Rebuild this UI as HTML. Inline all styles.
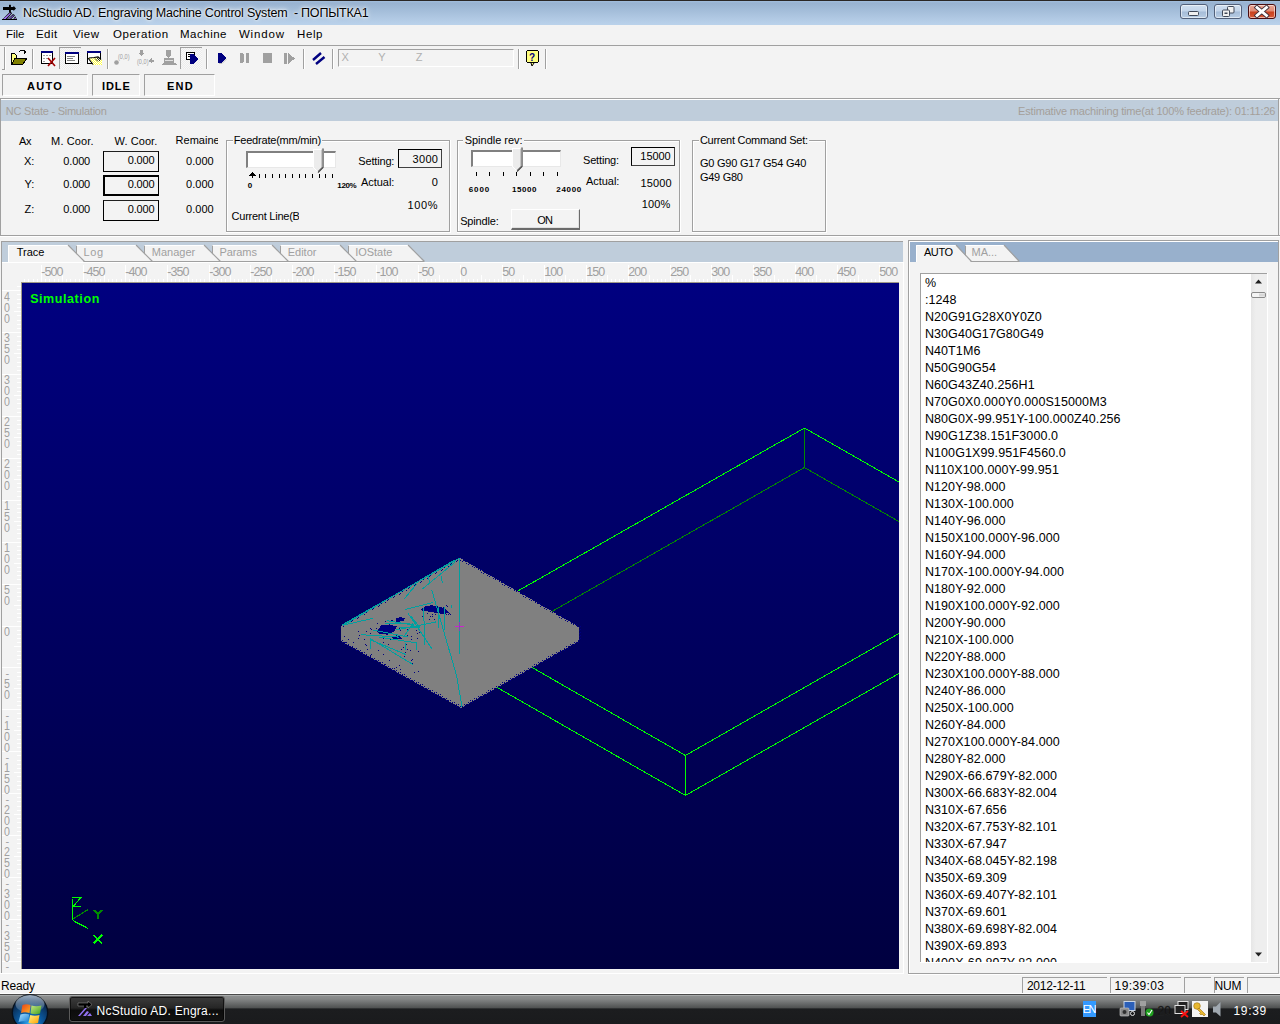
<!DOCTYPE html>
<html><head><meta charset="utf-8"><style>
html,body{margin:0;padding:0;width:1280px;height:1024px;overflow:hidden;background:#f3f3f3;}
body{position:relative;font-family:"Liberation Sans",sans-serif;}
body>div,body>svg{position:absolute;white-space:nowrap;}
</style></head><body>
<div style="left:0px;top:0px;width:1280px;height:25px;background:linear-gradient(#2a2624 0px,#2a2624 1px,#a2bedd 1px,#98b2d0 3px,#b9d1ea 24px,#b9d1ea 25px);"></div>
<svg style="left:0;top:0" width="24" height="24" viewBox="0 0 24 24">
<path d="M3 7 L13.5 7 L13.5 5.8 L16 8.4 L13.5 11 L13.5 9.9 L3 9.9 Z" fill="#000"/>
<rect x="9" y="4.8" width="1.9" height="7.5" fill="#000"/>
<path d="M1.8 20 L10 11.8 L12.2 13 L6.3 20 Z" fill="#000"/>
<path d="M3.2 19 L9.9 12.9 L11 13.5 L5.6 19 Z" fill="#a878ff"/>
<path d="M7 20 L13 14 L15 15.2 L10.2 20 Z" fill="#000"/>
<path d="M8.6 19 L13.2 15 L13.9 15.4 L9.9 19 Z" fill="#9a6cf8"/>
<path d="M12.8 20 L15.2 16.2 L17.2 20 Z" fill="#000"/>
<path d="M14 19.2 L15.2 17.5 L16.2 19.2 Z" fill="#b080ff"/>
<rect x="2" y="19" width="15" height="1" fill="#000"/>
</svg>
<div style="left:1180px;top:4px;width:28px;height:15px;background:linear-gradient(#d0dff0 0%,#c2d4ea 48%,#a5bcd8 52%,#b8cde4 100%);border:1px solid #52607a;border-radius:3px;box-sizing:border-box;box-shadow:inset 0 0 0 1px rgba(255,255,255,.55);"></div>
<div style="left:1214px;top:4px;width:28px;height:15px;background:linear-gradient(#d0dff0 0%,#c2d4ea 48%,#a5bcd8 52%,#b8cde4 100%);border:1px solid #52607a;border-radius:3px;box-sizing:border-box;box-shadow:inset 0 0 0 1px rgba(255,255,255,.55);"></div>
<div style="left:1248px;top:4px;width:28px;height:15px;background:linear-gradient(#e9a594 0%,#e08a74 48%,#c8401e 52%,#d85a38 100%);border:1px solid #4a0c10;border-radius:3px;box-sizing:border-box;box-shadow:inset 0 0 0 1px rgba(255,255,255,.55);"></div>
<svg style="left:1170px;top:0" width="110" height="24" viewBox="1170 0 110 24">
<rect x="1188.5" y="11.5" width="10" height="4" rx="1" fill="#f0f0f0" stroke="#404858"/>
<rect x="1227.5" y="6.5" width="6.5" height="6.5" rx="1" fill="#f0f0f0" stroke="#404858"/>
<rect x="1222.5" y="10" width="7" height="6.5" rx="1" fill="#f0f0f0" stroke="#404858"/>
<rect x="1224.5" y="12.5" width="3" height="1.5" fill="#404858"/>
<path d="M1257 7.5 L1266.5 15.5 M1266.5 7.5 L1257 15.5" stroke="#40303a" stroke-width="4.6" stroke-linecap="square"/>
<path d="M1257 7.5 L1266.5 15.5 M1266.5 7.5 L1257 15.5" stroke="#fff" stroke-width="2.8" stroke-linecap="square"/>
</svg>
<div style="left:22.97px;top:7.39px;font-size:12.5px;line-height:12.5px;color:#000;letter-spacing:-0.208px;white-space:pre;text-shadow:0 0 2px rgba(255,255,255,.95),0 0 4px rgba(255,255,255,.9),0 0 7px rgba(255,255,255,.7);">NcStudio AD. Engraving Machine Control System  - ПОПЫТКА1</div>
<div style="left:0px;top:25px;width:1280px;height:21px;background:#f3f3f3;"></div>
<div style="left:0px;top:45px;width:1280px;height:1px;background:#a0a0a0;"></div>
<div style="left:6.06px;top:28.98px;font-size:11.5px;line-height:11.5px;color:#000;letter-spacing:-0.025px;">File</div>
<div style="left:36.06px;top:28.98px;font-size:11.5px;line-height:11.5px;color:#000;letter-spacing:0.404px;">Edit</div>
<div style="left:72.95px;top:28.98px;font-size:11.5px;line-height:11.5px;color:#000;letter-spacing:0.435px;">View</div>
<div style="left:112.96px;top:28.98px;font-size:11.5px;line-height:11.5px;color:#000;letter-spacing:0.598px;">Operation</div>
<div style="left:180.06px;top:28.98px;font-size:11.5px;line-height:11.5px;color:#000;letter-spacing:0.498px;">Machine</div>
<div style="left:238.95px;top:28.98px;font-size:11.5px;line-height:11.5px;color:#000;letter-spacing:0.824px;">Window</div>
<div style="left:297.06px;top:28.98px;font-size:11.5px;line-height:11.5px;color:#000;letter-spacing:0.592px;">Help</div>
<div style="left:0px;top:46px;width:1280px;height:26px;background:#f3f3f3;"></div>
<div style="left:4px;top:47px;width:1px;height:23px;background:#a0a0a0;"></div>
<div style="left:5px;top:47px;width:1px;height:23px;background:#fff;"></div>
<div style="left:2px;top:69px;width:3px;height:1px;background:#a0a0a0;"></div>
<div style="left:32px;top:49px;width:1px;height:20px;background:#a0a0a0;"></div>
<div style="left:33px;top:49px;width:1px;height:20px;background:#fff;"></div>
<div style="left:107px;top:49px;width:1px;height:20px;background:#a0a0a0;"></div>
<div style="left:108px;top:49px;width:1px;height:20px;background:#fff;"></div>
<div style="left:206px;top:49px;width:1px;height:20px;background:#a0a0a0;"></div>
<div style="left:207px;top:49px;width:1px;height:20px;background:#fff;"></div>
<div style="left:303px;top:49px;width:1px;height:20px;background:#a0a0a0;"></div>
<div style="left:304px;top:49px;width:1px;height:20px;background:#fff;"></div>
<div style="left:332px;top:49px;width:1px;height:20px;background:#a0a0a0;"></div>
<div style="left:333px;top:49px;width:1px;height:20px;background:#fff;"></div>
<div style="left:518px;top:49px;width:1px;height:20px;background:#a0a0a0;"></div>
<div style="left:519px;top:49px;width:1px;height:20px;background:#fff;"></div>
<div style="left:545px;top:49px;width:1px;height:20px;background:#a0a0a0;"></div>
<div style="left:546px;top:49px;width:1px;height:20px;background:#fff;"></div>
<div style="left:59px;top:47px;width:22px;height:22px;border-top:1px solid #a0a0a0;border-left:1px solid #a0a0a0;box-sizing:border-box;background:repeating-conic-gradient(#f8f8f8 0 25%,#ececec 0 50%) 0 0/2px 2px;"></div>
<div style="left:180px;top:47px;width:22px;height:22px;border-top:1px solid #a0a0a0;border-left:1px solid #a0a0a0;box-sizing:border-box;background:repeating-conic-gradient(#f8f8f8 0 25%,#ececec 0 50%) 0 0/2px 2px;"></div>
<svg style="left:0;top:44px" width="560" height="28" viewBox="0 44 560 28" shape-rendering="crispEdges">
<!-- folder -->
<path d="M11 55 L11 64 L23 64 L27 58 L16 58 L16 55 L14 53 L12 53 Z" fill="#ffff80" stroke="#000" stroke-width="1"/>
<path d="M12 64 L15 58 L27 58 L23 64 Z" fill="#808000" stroke="#000" stroke-width="1"/>
<path d="M19 52 Q22 49 25 51" fill="none" stroke="#000" stroke-width="1"/>
<path d="M24 50 L27 52 L24 54 Z" fill="#000"/>
<!-- table with red X -->
<rect x="41.5" y="51.5" width="11" height="12" fill="#fff" stroke="#000"/>
<rect x="41" y="51" width="12" height="2" fill="#000080"/>
<g fill="#a0a0a0"><rect x="43" y="55" width="2" height="1"/><rect x="46" y="55" width="2" height="1"/><rect x="49" y="55" width="2" height="1"/><rect x="43" y="58" width="2" height="1"/><rect x="46" y="58" width="2" height="1"/><rect x="43" y="61" width="2" height="1"/></g>
<path d="M48 58 L55 66 M55 58 L48 66" stroke="#a00000" stroke-width="1.6" shape-rendering="auto"/>
<!-- window -->
<rect x="65.5" y="52.5" width="13" height="11" fill="#fff" stroke="#000"/>
<rect x="65" y="52" width="14" height="2" fill="#000080"/>
<g fill="#808080"><rect x="67" y="56" width="8" height="1"/><rect x="67" y="58" width="6" height="1"/><rect x="67" y="60" width="8" height="1"/></g>
<!-- window with hand -->
<rect x="87.5" y="51.5" width="13" height="12" fill="#fff" stroke="#000"/>
<rect x="87" y="51" width="14" height="2" fill="#000080"/>
<defs><pattern id="chk" width="2" height="2" patternUnits="userSpaceOnUse"><rect width="2" height="2" fill="#ffff40"/><rect width="1" height="1" fill="#fff"/><rect x="1" y="1" width="1" height="1" fill="#fff"/></pattern></defs>
<path d="M88 58 L92 58.5 L95 57 L99 57.5 L101.5 60 L101.5 65 L96 65 L92.5 64.5 Z" fill="url(#chk)"/>
<path d="M88 58 L93 64.5 M89 58 L94 57.5 L98 57 L101 59.5" fill="none" stroke="#000" stroke-width="1.2" shape-rendering="auto"/>
<path d="M95 58.5 L98 61.5 M97 58 L100 61" stroke="#000" stroke-width=".8" shape-rendering="auto"/>
<!-- (0,0) dot -->
<circle cx="116.5" cy="62.5" r="2.3" fill="#a0a0a0" shape-rendering="auto"/>
<text x="118" y="58.6" font-family="Liberation Sans" font-size="7.5" fill="#a0a0a0" textLength="11.5" lengthAdjust="spacingAndGlyphs">(0,0)</text>
<!-- (0,0) arrows -->
<path d="M140 50 h3 v3 h2 l-3.5 3 l-3.5 -3 h2 z" fill="#a0a0a0"/>
<text x="137" y="63.8" font-family="Liberation Sans" font-size="7.5" fill="#a0a0a0" textLength="11.5" lengthAdjust="spacingAndGlyphs">(0,0)</text>
<path d="M148.5 60.8 l3 -2.5 v1.5 h2.5 v2 h-2.5 v1.5 z" fill="#a0a0a0"/>
<!-- machine -->
<path d="M166 50 h5 v5 l-2.5 3 l-2.5 -3 z" fill="#a0a0a0"/>
<rect x="164" y="58" width="10" height="5" fill="#a0a0a0"/>
<rect x="165" y="59.5" width="8" height="1" fill="#e0e0e0"/>
<path d="M161 65 L163 63 L175 63 L177 65 Z" fill="#a0a0a0"/>
<!-- export -->
<rect x="186.5" y="52.5" width="8" height="7" fill="#fff" stroke="#000"/>
<rect x="188" y="54" width="4" height="1" fill="#000"/><rect x="188" y="56" width="4" height="1" fill="#000"/>
<path d="M190 54 L193 54 L198 59 L193 64 L190 64 Z" fill="#000080"/>
<!-- play/pause/stop/step -->
<path d="M218 53 L221 53 L226 58 L221 63 L218 63 Z" fill="#000080"/>
<path d="M219 63.5 L222 63.5 L226.5 59" stroke="#c0c0c0" fill="none" shape-rendering="auto"/>
<rect x="240" y="53" width="3.5" height="10" rx="1" fill="#a0a0a0"/><rect x="245.5" y="53" width="3.5" height="10" rx="1" fill="#a0a0a0"/>
<rect x="263" y="53" width="9" height="10" rx="1" fill="#a0a0a0"/>
<rect x="284" y="53" width="3" height="11" rx="1" fill="#a0a0a0"/>
<path d="M288 53 L295 58.5 L288 64 Z" fill="#a0a0a0"/>
<!-- // -->
<path d="M313 60 L321 53 M316 64 L324.5 57" stroke="#000080" stroke-width="2.4" shape-rendering="auto"/>
<!-- help -->
<rect x="526.5" y="50.5" width="12" height="12" rx="2" fill="#ffff80" stroke="#000"/>
<path d="M531 63 L532 66 L534 63" fill="#ffff80" stroke="#000" shape-rendering="auto"/>
<text x="529" y="60.5" font-family="Liberation Sans" font-weight="bold" font-size="10" fill="#000080">?</text>
</svg>
<div style="left:338px;top:49px;width:176px;height:18px;border-top:1px solid #a0a0a0;border-left:1px solid #a0a0a0;border-right:1px solid #fff;border-bottom:1px solid #fff;box-sizing:border-box;"></div>
<div style="left:341.45px;top:51.63px;font-size:11px;line-height:11px;color:#b0b0b0;">X</div>
<div style="left:378.26px;top:51.63px;font-size:11px;line-height:11px;color:#b0b0b0;">Y</div>
<div style="left:415.65px;top:51.63px;font-size:11px;line-height:11px;color:#b0b0b0;">Z</div>
<div style="left:2px;top:74px;width:86px;height:22px;border-top:1px solid #a0a0a0;border-left:1px solid #a0a0a0;border-right:1px solid #fff;border-bottom:1px solid #fff;box-sizing:border-box;"></div>
<div style="left:27.03px;top:81.23px;font-size:11px;line-height:11px;color:#000;font-weight:bold;letter-spacing:1.257px;">AUTO</div>
<div style="left:92px;top:74px;width:48px;height:22px;border-top:1px solid #a0a0a0;border-left:1px solid #a0a0a0;border-right:1px solid #fff;border-bottom:1px solid #fff;box-sizing:border-box;"></div>
<div style="left:102.06px;top:81.23px;font-size:11px;line-height:11px;color:#000;font-weight:bold;letter-spacing:0.903px;">IDLE</div>
<div style="left:144px;top:74px;width:71px;height:22px;border-top:1px solid #a0a0a0;border-left:1px solid #a0a0a0;border-right:1px solid #fff;border-bottom:1px solid #fff;box-sizing:border-box;"></div>
<div style="left:167.01px;top:81.23px;font-size:11px;line-height:11px;color:#000;font-weight:bold;letter-spacing:1.236px;">END</div>
<div style="left:0px;top:98px;width:1280px;height:1px;background:#a0a0a0;"></div>
<div style="left:0px;top:99px;width:1280px;height:137px;background:#f3f3f3;"></div>
<div style="left:0px;top:99px;width:1px;height:137px;background:#a0a0a0;"></div>
<div style="left:1px;top:99px;width:1278px;height:1px;background:#fff;"></div>
<div style="left:1px;top:100px;width:1277px;height:21px;background:#bfcddb;"></div>
<div style="left:1278px;top:99px;width:1px;height:137px;background:#a0a0a0;"></div>
<div style="left:5.85px;top:105.53px;font-size:11px;line-height:11px;color:#a49f9a;letter-spacing:-0.237px;">NC State - Simulation</div>
<div style="left:1018.10px;top:105.53px;font-size:11px;line-height:11px;color:#a49f9a;letter-spacing:-0.185px;">Estimative machining time(at 100% feedrate): 01:11:26</div>
<div style="left:0px;top:235px;width:1280px;height:1px;background:#a0a0a0;"></div>
<div style="left:0px;top:236px;width:1280px;height:1px;background:#fff;"></div>
<div style="left:18.88px;top:135.73px;font-size:11px;line-height:11px;color:#000;letter-spacing:-0.197px;">Ax</div>
<div style="left:51.10px;top:135.73px;font-size:11px;line-height:11px;color:#000;letter-spacing:0.120px;">M. Coor.</div>
<div style="left:114.55px;top:135.73px;font-size:11px;line-height:11px;color:#000;letter-spacing:0.082px;">W. Coor.</div>
<div style="left:175px;top:130px;width:43px;height:20px;overflow:hidden;"><div style="position:absolute;left:0.6px;top:5.3px;font-size:11px;line-height:11px;">Remained</div></div>
<div style="left:23.91px;top:155.83px;font-size:11px;line-height:11px;color:#000;">X:</div>
<div style="left:63.37px;top:155.83px;font-size:11px;line-height:11px;color:#000;letter-spacing:-0.167px;">0.000</div>
<div style="left:186.07px;top:155.83px;font-size:11px;line-height:11px;color:#000;letter-spacing:0.033px;">0.000</div>
<div style="left:24.52px;top:179.23px;font-size:11px;line-height:11px;color:#000;">Y:</div>
<div style="left:63.37px;top:179.23px;font-size:11px;line-height:11px;color:#000;letter-spacing:-0.167px;">0.000</div>
<div style="left:186.07px;top:179.23px;font-size:11px;line-height:11px;color:#000;letter-spacing:0.033px;">0.000</div>
<div style="left:24.53px;top:204.43px;font-size:11px;line-height:11px;color:#000;">Z:</div>
<div style="left:63.37px;top:204.43px;font-size:11px;line-height:11px;color:#000;letter-spacing:-0.167px;">0.000</div>
<div style="left:186.07px;top:204.43px;font-size:11px;line-height:11px;color:#000;letter-spacing:0.033px;">0.000</div>
<div style="left:103px;top:151px;width:56px;height:21px;border:1px solid #000;box-sizing:border-box;border-top-color:#202020;"></div>
<div style="left:127.77px;top:155.23px;font-size:11px;line-height:11px;color:#000;letter-spacing:-0.167px;">0.000</div>
<div style="left:103px;top:175px;width:56px;height:21px;border:2px solid #000;box-sizing:border-box;border-right-width:1px;border-bottom-width:2px;"></div>
<div style="left:127.77px;top:179.23px;font-size:11px;line-height:11px;color:#000;letter-spacing:-0.167px;">0.000</div>
<div style="left:103px;top:200px;width:56px;height:21px;border:1px solid #000;box-sizing:border-box;border-top-color:#202020;"></div>
<div style="left:127.77px;top:204.23px;font-size:11px;line-height:11px;color:#000;letter-spacing:-0.167px;">0.000</div>
<div style="left:226px;top:140px;width:224px;height:92px;border:1px solid #a0a0a0;box-sizing:border-box;"></div>
<div style="left:227px;top:141px;width:222px;height:90px;border-left:1px solid #fff;border-top:1px solid #fff;box-sizing:border-box;"></div>
<div style="left:450px;top:140px;width:1px;height:93px;background:#fff;"></div>
<div style="left:226px;top:232px;width:225px;height:1px;background:#fff;"></div>
<div style="left:232.7px;top:135px;width:89.7px;height:10px;background:#f3f3f3;"></div>
<div style="left:233.80px;top:135.13px;font-size:11px;line-height:11px;color:#000;letter-spacing:-0.212px;">Feedrate(mm/min)</div>
<div style="left:457px;top:140px;width:223px;height:92px;border:1px solid #a0a0a0;box-sizing:border-box;"></div>
<div style="left:458px;top:141px;width:221px;height:90px;border-left:1px solid #fff;border-top:1px solid #fff;box-sizing:border-box;"></div>
<div style="left:680px;top:140px;width:1px;height:93px;background:#fff;"></div>
<div style="left:457px;top:232px;width:224px;height:1px;background:#fff;"></div>
<div style="left:463.2px;top:135px;width:60.4px;height:10px;background:#f3f3f3;"></div>
<div style="left:464.70px;top:135.13px;font-size:11px;line-height:11px;color:#000;letter-spacing:-0.017px;">Spindle rev:</div>
<div style="left:692px;top:140px;width:134px;height:92px;border:1px solid #a0a0a0;box-sizing:border-box;"></div>
<div style="left:693px;top:141px;width:132px;height:90px;border-left:1px solid #fff;border-top:1px solid #fff;box-sizing:border-box;"></div>
<div style="left:826px;top:140px;width:1px;height:93px;background:#fff;"></div>
<div style="left:692px;top:232px;width:135px;height:1px;background:#fff;"></div>
<div style="left:698.5px;top:135px;width:110.5px;height:10px;background:#f3f3f3;"></div>
<div style="left:699.94px;top:135.13px;font-size:11px;line-height:11px;color:#000;letter-spacing:-0.265px;">Current Command Set:</div>
<div style="left:246px;top:151px;width:90px;height:17px;background:#fff;border-top:2px solid #808080;border-left:2px solid #808080;border-right:1px solid #e8e8e8;border-bottom:1px solid #e8e8e8;box-sizing:border-box;"></div>
<svg style="left:312px;top:148px" width="14" height="26" viewBox="0 0 14 26" shape-rendering="crispEdges">
<path d="M1 1 L11 1 L11 19 L6 24 L1 19 Z" fill="#ececec" stroke="#fff" stroke-width="1"/>
<path d="M11 0.5 L11 19.5 L6 24.5" fill="none" stroke="#404040" stroke-width="1.2" shape-rendering="auto"/>
<path d="M10 1.5 L10 19 L6 23" fill="none" stroke="#a0a0a0" stroke-width="1" shape-rendering="auto"/>
</svg>
<svg style="left:0;top:0" width="460" height="240" shape-rendering="crispEdges"><rect x="252.0" y="174" width="1" height="4" fill="#000"/><rect x="258.7" y="174" width="1" height="4" fill="#000"/><rect x="265.3" y="174" width="1" height="4" fill="#000"/><rect x="272.0" y="174" width="1" height="4" fill="#000"/><rect x="278.7" y="174" width="1" height="4" fill="#000"/><rect x="285.4" y="174" width="1" height="4" fill="#000"/><rect x="292.0" y="174" width="1" height="4" fill="#000"/><rect x="298.7" y="174" width="1" height="4" fill="#000"/><rect x="305.4" y="174" width="1" height="4" fill="#000"/><rect x="312.0" y="174" width="1" height="4" fill="#000"/><rect x="318.7" y="174" width="1" height="4" fill="#000"/><rect x="325.4" y="174" width="1" height="4" fill="#000"/><rect x="332.0" y="174" width="1" height="4" fill="#000"/><path d="M249 175 L252 172 L255 175 Z" fill="#000"/><rect x="249" y="175" width="7" height="1" fill="#000"/></svg>
<div style="left:247.68px;top:182.49px;font-size:8px;line-height:8px;color:#000;font-weight:bold;">0</div>
<div style="left:337.30px;top:182.49px;font-size:8px;line-height:8px;color:#000;font-weight:bold;letter-spacing:-0.349px;">120%</div>
<div style="left:358.30px;top:155.63px;font-size:11px;line-height:11px;color:#000;letter-spacing:-0.171px;">Setting:</div>
<div style="left:398px;top:149px;width:44px;height:19px;border:1px solid #000;box-sizing:border-box;border-right-color:#404040;border-bottom-color:#404040;"></div>
<div style="left:412.58px;top:153.63px;font-size:11px;line-height:11px;color:#000;letter-spacing:0.293px;">3000</div>
<div style="left:360.98px;top:177.23px;font-size:11px;line-height:11px;color:#000;letter-spacing:-0.034px;">Actual:</div>
<div style="left:431.81px;top:177.23px;font-size:11px;line-height:11px;color:#000;">0</div>
<div style="left:407.56px;top:200.33px;font-size:11px;line-height:11px;color:#000;letter-spacing:0.632px;">100%</div>
<div style="left:231px;top:205px;width:67.5px;height:20px;overflow:hidden;"><div style="position:absolute;left:0.6px;top:5.9px;font-size:11px;line-height:11px;letter-spacing:-0.25px;">Current Line(Block)</div></div>
<div style="left:471px;top:150px;width:90px;height:17px;background:#fff;border-top:2px solid #808080;border-left:2px solid #808080;border-right:1px solid #e8e8e8;border-bottom:1px solid #e8e8e8;box-sizing:border-box;"></div>
<svg style="left:511px;top:147px" width="14" height="26" viewBox="0 0 14 26" shape-rendering="crispEdges">
<path d="M1 1 L11 1 L11 19 L6 24 L1 19 Z" fill="#ececec" stroke="#fff" stroke-width="1"/>
<path d="M11 0.5 L11 19.5 L6 24.5" fill="none" stroke="#404040" stroke-width="1.2" shape-rendering="auto"/>
<path d="M10 1.5 L10 19 L6 23" fill="none" stroke="#a0a0a0" stroke-width="1" shape-rendering="auto"/>
</svg>
<svg style="left:0;top:0" width="700" height="240" shape-rendering="crispEdges"><rect x="476.0" y="172" width="1" height="4" fill="#000"/><rect x="489.4" y="172" width="1" height="4" fill="#000"/><rect x="502.9" y="172" width="1" height="4" fill="#000"/><rect x="516.3" y="172" width="1" height="4" fill="#000"/><rect x="529.7" y="172" width="1" height="4" fill="#000"/><rect x="543.1" y="172" width="1" height="4" fill="#000"/><rect x="556.6" y="172" width="1" height="4" fill="#000"/></svg>
<div style="left:468.71px;top:186.49px;font-size:8px;line-height:8px;color:#000;font-weight:bold;letter-spacing:0.941px;">6000</div>
<div style="left:512.00px;top:186.49px;font-size:8px;line-height:8px;color:#000;font-weight:bold;letter-spacing:0.521px;">15000</div>
<div style="left:556.32px;top:186.49px;font-size:8px;line-height:8px;color:#000;font-weight:bold;letter-spacing:0.690px;">24000</div>
<div style="left:583.00px;top:155.43px;font-size:11px;line-height:11px;color:#000;letter-spacing:-0.171px;">Setting:</div>
<div style="left:631px;top:147px;width:44px;height:19px;border:1px solid #000;box-sizing:border-box;border-right-color:#404040;border-bottom-color:#404040;"></div>
<div style="left:640.36px;top:151.33px;font-size:11px;line-height:11px;color:#000;letter-spacing:-0.080px;">15000</div>
<div style="left:585.98px;top:176.43px;font-size:11px;line-height:11px;color:#000;letter-spacing:-0.034px;">Actual:</div>
<div style="left:640.46px;top:177.63px;font-size:11px;line-height:11px;color:#000;letter-spacing:0.145px;">15000</div>
<div style="left:641.76px;top:199.23px;font-size:11px;line-height:11px;color:#000;letter-spacing:0.165px;">100%</div>
<div style="left:460.20px;top:216.03px;font-size:11px;line-height:11px;color:#000;letter-spacing:-0.164px;">Spindle:</div>
<div style="left:511px;top:209px;width:69px;height:21px;background:#f3f3f3;border-top:1px solid #fff;border-left:1px solid #fff;border-right:1px solid #6a6a6a;border-bottom:2px solid #6a6a6a;box-sizing:border-box;box-shadow:inset -1px -1px 0 #e0e0e0;"></div>
<div style="left:537.33px;top:214.53px;font-size:11px;line-height:11px;color:#000;letter-spacing:-0.782px;">ON</div>
<div style="left:699.95px;top:158.13px;font-size:11px;line-height:11px;color:#000;letter-spacing:-0.217px;">G0 G90 G17 G54 G40</div>
<div style="left:699.95px;top:172.03px;font-size:11px;line-height:11px;color:#000;letter-spacing:-0.276px;">G49 G80</div>
<div style="left:1px;top:241px;width:902px;height:1px;background:#a0a0a0;"></div>
<div style="left:1px;top:241px;width:1px;height:732px;background:#a0a0a0;"></div>
<div style="left:2px;top:242px;width:901px;height:20px;background:#bfcddb;"></div>
<div style="left:2px;top:262px;width:901px;height:1px;background:#fff;"></div>
<svg style="left:0;top:0" width="910" height="270"><path d="M348 245 L408 245 L424 262 L348 262 Z" fill="#f3f3f3"/><path d="M348.5 262 L348.5 245.5 L408 245.5" fill="none" stroke="#a0a0a0" stroke-width="1"/><path d="M348.5 245.5 L408 245.5" fill="none" stroke="#fff" stroke-width="1"/><path d="M348 261.5 L424 261.5" fill="none" stroke="#a0a0a0" stroke-width="1"/><path d="M408 245 L424.5 261.5" fill="none" stroke="#a0a0a0" stroke-width="1.1"/><path d="M280 245 L340 245 L356 262 L280 262 Z" fill="#f3f3f3"/><path d="M280.5 262 L280.5 245.5 L340 245.5" fill="none" stroke="#a0a0a0" stroke-width="1"/><path d="M280.5 245.5 L340 245.5" fill="none" stroke="#fff" stroke-width="1"/><path d="M280 261.5 L356 261.5" fill="none" stroke="#a0a0a0" stroke-width="1"/><path d="M340 245 L356.5 261.5" fill="none" stroke="#a0a0a0" stroke-width="1.1"/><path d="M212 245 L272 245 L288 262 L212 262 Z" fill="#f3f3f3"/><path d="M212.5 262 L212.5 245.5 L272 245.5" fill="none" stroke="#a0a0a0" stroke-width="1"/><path d="M212.5 245.5 L272 245.5" fill="none" stroke="#fff" stroke-width="1"/><path d="M212 261.5 L288 261.5" fill="none" stroke="#a0a0a0" stroke-width="1"/><path d="M272 245 L288.5 261.5" fill="none" stroke="#a0a0a0" stroke-width="1.1"/><path d="M144 245 L204 245 L220 262 L144 262 Z" fill="#f3f3f3"/><path d="M144.5 262 L144.5 245.5 L204 245.5" fill="none" stroke="#a0a0a0" stroke-width="1"/><path d="M144.5 245.5 L204 245.5" fill="none" stroke="#fff" stroke-width="1"/><path d="M144 261.5 L220 261.5" fill="none" stroke="#a0a0a0" stroke-width="1"/><path d="M204 245 L220.5 261.5" fill="none" stroke="#a0a0a0" stroke-width="1.1"/><path d="M76 245 L136 245 L152 262 L76 262 Z" fill="#f3f3f3"/><path d="M76.5 262 L76.5 245.5 L136 245.5" fill="none" stroke="#a0a0a0" stroke-width="1"/><path d="M76.5 245.5 L136 245.5" fill="none" stroke="#fff" stroke-width="1"/><path d="M76 261.5 L152 261.5" fill="none" stroke="#a0a0a0" stroke-width="1"/><path d="M136 245 L152.5 261.5" fill="none" stroke="#a0a0a0" stroke-width="1.1"/><path d="M8 245 L68 245 L84 262 L8 262 Z" fill="#f3f3f3"/><path d="M8.5 262 L8.5 245.5 L68 245.5" fill="none" stroke="#fff" stroke-width="1"/><path d="M68 245 L84.5 261.5" fill="none" stroke="#a0a0a0" stroke-width="1.1"/></svg>
<div style="left:16.75px;top:247.13px;font-size:11px;line-height:11px;color:#000;letter-spacing:0.007px;">Trace</div>
<div style="left:83.50px;top:247.13px;font-size:11px;line-height:11px;color:#a0a0a0;letter-spacing:0.629px;">Log</div>
<div style="left:151.70px;top:247.13px;font-size:11px;line-height:11px;color:#a0a0a0;letter-spacing:0.028px;">Manager</div>
<div style="left:219.60px;top:247.13px;font-size:11px;line-height:11px;color:#a0a0a0;letter-spacing:-0.120px;">Params</div>
<div style="left:287.80px;top:247.13px;font-size:11px;line-height:11px;color:#a0a0a0;letter-spacing:-0.030px;">Editor</div>
<div style="left:355.18px;top:247.13px;font-size:11px;line-height:11px;color:#a0a0a0;letter-spacing:-0.032px;">IOState</div>
<svg style="left:0;top:0" width="910" height="980" shape-rendering="crispEdges"><rect x="41" y="265" width="1" height="17" fill="#fff"/><rect x="62" y="275" width="1" height="7" fill="#fff"/><rect x="45" y="279" width="1" height="3" fill="#fff"/><rect x="49" y="279" width="1" height="3" fill="#fff"/><rect x="54" y="279" width="1" height="3" fill="#fff"/><rect x="58" y="279" width="1" height="3" fill="#fff"/><rect x="66" y="279" width="1" height="3" fill="#fff"/><rect x="70" y="279" width="1" height="3" fill="#fff"/><rect x="75" y="279" width="1" height="3" fill="#fff"/><rect x="79" y="279" width="1" height="3" fill="#fff"/><rect x="83" y="265" width="1" height="17" fill="#fff"/><rect x="104" y="275" width="1" height="7" fill="#fff"/><rect x="87" y="279" width="1" height="3" fill="#fff"/><rect x="91" y="279" width="1" height="3" fill="#fff"/><rect x="95" y="279" width="1" height="3" fill="#fff"/><rect x="100" y="279" width="1" height="3" fill="#fff"/><rect x="108" y="279" width="1" height="3" fill="#fff"/><rect x="112" y="279" width="1" height="3" fill="#fff"/><rect x="116" y="279" width="1" height="3" fill="#fff"/><rect x="121" y="279" width="1" height="3" fill="#fff"/><rect x="125" y="265" width="1" height="17" fill="#fff"/><rect x="146" y="275" width="1" height="7" fill="#fff"/><rect x="129" y="279" width="1" height="3" fill="#fff"/><rect x="133" y="279" width="1" height="3" fill="#fff"/><rect x="137" y="279" width="1" height="3" fill="#fff"/><rect x="142" y="279" width="1" height="3" fill="#fff"/><rect x="150" y="279" width="1" height="3" fill="#fff"/><rect x="154" y="279" width="1" height="3" fill="#fff"/><rect x="158" y="279" width="1" height="3" fill="#fff"/><rect x="163" y="279" width="1" height="3" fill="#fff"/><rect x="167" y="265" width="1" height="17" fill="#fff"/><rect x="188" y="275" width="1" height="7" fill="#fff"/><rect x="171" y="279" width="1" height="3" fill="#fff"/><rect x="175" y="279" width="1" height="3" fill="#fff"/><rect x="179" y="279" width="1" height="3" fill="#fff"/><rect x="183" y="279" width="1" height="3" fill="#fff"/><rect x="192" y="279" width="1" height="3" fill="#fff"/><rect x="196" y="279" width="1" height="3" fill="#fff"/><rect x="200" y="279" width="1" height="3" fill="#fff"/><rect x="204" y="279" width="1" height="3" fill="#fff"/><rect x="209" y="265" width="1" height="17" fill="#fff"/><rect x="230" y="275" width="1" height="7" fill="#fff"/><rect x="213" y="279" width="1" height="3" fill="#fff"/><rect x="217" y="279" width="1" height="3" fill="#fff"/><rect x="221" y="279" width="1" height="3" fill="#fff"/><rect x="225" y="279" width="1" height="3" fill="#fff"/><rect x="234" y="279" width="1" height="3" fill="#fff"/><rect x="238" y="279" width="1" height="3" fill="#fff"/><rect x="242" y="279" width="1" height="3" fill="#fff"/><rect x="246" y="279" width="1" height="3" fill="#fff"/><rect x="250" y="265" width="1" height="17" fill="#fff"/><rect x="271" y="275" width="1" height="7" fill="#fff"/><rect x="255" y="279" width="1" height="3" fill="#fff"/><rect x="259" y="279" width="1" height="3" fill="#fff"/><rect x="263" y="279" width="1" height="3" fill="#fff"/><rect x="267" y="279" width="1" height="3" fill="#fff"/><rect x="276" y="279" width="1" height="3" fill="#fff"/><rect x="280" y="279" width="1" height="3" fill="#fff"/><rect x="284" y="279" width="1" height="3" fill="#fff"/><rect x="288" y="279" width="1" height="3" fill="#fff"/><rect x="292" y="265" width="1" height="17" fill="#fff"/><rect x="313" y="275" width="1" height="7" fill="#fff"/><rect x="297" y="279" width="1" height="3" fill="#fff"/><rect x="301" y="279" width="1" height="3" fill="#fff"/><rect x="305" y="279" width="1" height="3" fill="#fff"/><rect x="309" y="279" width="1" height="3" fill="#fff"/><rect x="318" y="279" width="1" height="3" fill="#fff"/><rect x="322" y="279" width="1" height="3" fill="#fff"/><rect x="326" y="279" width="1" height="3" fill="#fff"/><rect x="330" y="279" width="1" height="3" fill="#fff"/><rect x="334" y="265" width="1" height="17" fill="#fff"/><rect x="355" y="275" width="1" height="7" fill="#fff"/><rect x="338" y="279" width="1" height="3" fill="#fff"/><rect x="343" y="279" width="1" height="3" fill="#fff"/><rect x="347" y="279" width="1" height="3" fill="#fff"/><rect x="351" y="279" width="1" height="3" fill="#fff"/><rect x="359" y="279" width="1" height="3" fill="#fff"/><rect x="364" y="279" width="1" height="3" fill="#fff"/><rect x="368" y="279" width="1" height="3" fill="#fff"/><rect x="372" y="279" width="1" height="3" fill="#fff"/><rect x="376" y="265" width="1" height="17" fill="#fff"/><rect x="397" y="275" width="1" height="7" fill="#fff"/><rect x="380" y="279" width="1" height="3" fill="#fff"/><rect x="385" y="279" width="1" height="3" fill="#fff"/><rect x="389" y="279" width="1" height="3" fill="#fff"/><rect x="393" y="279" width="1" height="3" fill="#fff"/><rect x="401" y="279" width="1" height="3" fill="#fff"/><rect x="406" y="279" width="1" height="3" fill="#fff"/><rect x="410" y="279" width="1" height="3" fill="#fff"/><rect x="414" y="279" width="1" height="3" fill="#fff"/><rect x="418" y="265" width="1" height="17" fill="#fff"/><rect x="439" y="275" width="1" height="7" fill="#fff"/><rect x="422" y="279" width="1" height="3" fill="#fff"/><rect x="426" y="279" width="1" height="3" fill="#fff"/><rect x="431" y="279" width="1" height="3" fill="#fff"/><rect x="435" y="279" width="1" height="3" fill="#fff"/><rect x="443" y="279" width="1" height="3" fill="#fff"/><rect x="447" y="279" width="1" height="3" fill="#fff"/><rect x="452" y="279" width="1" height="3" fill="#fff"/><rect x="456" y="279" width="1" height="3" fill="#fff"/><rect x="460" y="265" width="1" height="17" fill="#fff"/><rect x="481" y="275" width="1" height="7" fill="#fff"/><rect x="464" y="279" width="1" height="3" fill="#fff"/><rect x="468" y="279" width="1" height="3" fill="#fff"/><rect x="473" y="279" width="1" height="3" fill="#fff"/><rect x="477" y="279" width="1" height="3" fill="#fff"/><rect x="485" y="279" width="1" height="3" fill="#fff"/><rect x="489" y="279" width="1" height="3" fill="#fff"/><rect x="494" y="279" width="1" height="3" fill="#fff"/><rect x="498" y="279" width="1" height="3" fill="#fff"/><rect x="502" y="265" width="1" height="17" fill="#fff"/><rect x="523" y="275" width="1" height="7" fill="#fff"/><rect x="506" y="279" width="1" height="3" fill="#fff"/><rect x="510" y="279" width="1" height="3" fill="#fff"/><rect x="514" y="279" width="1" height="3" fill="#fff"/><rect x="519" y="279" width="1" height="3" fill="#fff"/><rect x="527" y="279" width="1" height="3" fill="#fff"/><rect x="531" y="279" width="1" height="3" fill="#fff"/><rect x="535" y="279" width="1" height="3" fill="#fff"/><rect x="540" y="279" width="1" height="3" fill="#fff"/><rect x="544" y="265" width="1" height="17" fill="#fff"/><rect x="565" y="275" width="1" height="7" fill="#fff"/><rect x="548" y="279" width="1" height="3" fill="#fff"/><rect x="552" y="279" width="1" height="3" fill="#fff"/><rect x="556" y="279" width="1" height="3" fill="#fff"/><rect x="561" y="279" width="1" height="3" fill="#fff"/><rect x="569" y="279" width="1" height="3" fill="#fff"/><rect x="573" y="279" width="1" height="3" fill="#fff"/><rect x="577" y="279" width="1" height="3" fill="#fff"/><rect x="582" y="279" width="1" height="3" fill="#fff"/><rect x="586" y="265" width="1" height="17" fill="#fff"/><rect x="607" y="275" width="1" height="7" fill="#fff"/><rect x="590" y="279" width="1" height="3" fill="#fff"/><rect x="594" y="279" width="1" height="3" fill="#fff"/><rect x="598" y="279" width="1" height="3" fill="#fff"/><rect x="602" y="279" width="1" height="3" fill="#fff"/><rect x="611" y="279" width="1" height="3" fill="#fff"/><rect x="615" y="279" width="1" height="3" fill="#fff"/><rect x="619" y="279" width="1" height="3" fill="#fff"/><rect x="623" y="279" width="1" height="3" fill="#fff"/><rect x="628" y="265" width="1" height="17" fill="#fff"/><rect x="649" y="275" width="1" height="7" fill="#fff"/><rect x="632" y="279" width="1" height="3" fill="#fff"/><rect x="636" y="279" width="1" height="3" fill="#fff"/><rect x="640" y="279" width="1" height="3" fill="#fff"/><rect x="644" y="279" width="1" height="3" fill="#fff"/><rect x="653" y="279" width="1" height="3" fill="#fff"/><rect x="657" y="279" width="1" height="3" fill="#fff"/><rect x="661" y="279" width="1" height="3" fill="#fff"/><rect x="665" y="279" width="1" height="3" fill="#fff"/><rect x="670" y="265" width="1" height="17" fill="#fff"/><rect x="690" y="275" width="1" height="7" fill="#fff"/><rect x="674" y="279" width="1" height="3" fill="#fff"/><rect x="678" y="279" width="1" height="3" fill="#fff"/><rect x="682" y="279" width="1" height="3" fill="#fff"/><rect x="686" y="279" width="1" height="3" fill="#fff"/><rect x="695" y="279" width="1" height="3" fill="#fff"/><rect x="699" y="279" width="1" height="3" fill="#fff"/><rect x="703" y="279" width="1" height="3" fill="#fff"/><rect x="707" y="279" width="1" height="3" fill="#fff"/><rect x="711" y="265" width="1" height="17" fill="#fff"/><rect x="732" y="275" width="1" height="7" fill="#fff"/><rect x="716" y="279" width="1" height="3" fill="#fff"/><rect x="720" y="279" width="1" height="3" fill="#fff"/><rect x="724" y="279" width="1" height="3" fill="#fff"/><rect x="728" y="279" width="1" height="3" fill="#fff"/><rect x="737" y="279" width="1" height="3" fill="#fff"/><rect x="741" y="279" width="1" height="3" fill="#fff"/><rect x="745" y="279" width="1" height="3" fill="#fff"/><rect x="749" y="279" width="1" height="3" fill="#fff"/><rect x="753" y="265" width="1" height="17" fill="#fff"/><rect x="774" y="275" width="1" height="7" fill="#fff"/><rect x="757" y="279" width="1" height="3" fill="#fff"/><rect x="762" y="279" width="1" height="3" fill="#fff"/><rect x="766" y="279" width="1" height="3" fill="#fff"/><rect x="770" y="279" width="1" height="3" fill="#fff"/><rect x="778" y="279" width="1" height="3" fill="#fff"/><rect x="783" y="279" width="1" height="3" fill="#fff"/><rect x="787" y="279" width="1" height="3" fill="#fff"/><rect x="791" y="279" width="1" height="3" fill="#fff"/><rect x="795" y="265" width="1" height="17" fill="#fff"/><rect x="816" y="275" width="1" height="7" fill="#fff"/><rect x="799" y="279" width="1" height="3" fill="#fff"/><rect x="804" y="279" width="1" height="3" fill="#fff"/><rect x="808" y="279" width="1" height="3" fill="#fff"/><rect x="812" y="279" width="1" height="3" fill="#fff"/><rect x="820" y="279" width="1" height="3" fill="#fff"/><rect x="825" y="279" width="1" height="3" fill="#fff"/><rect x="829" y="279" width="1" height="3" fill="#fff"/><rect x="833" y="279" width="1" height="3" fill="#fff"/><rect x="837" y="265" width="1" height="17" fill="#fff"/><rect x="858" y="275" width="1" height="7" fill="#fff"/><rect x="841" y="279" width="1" height="3" fill="#fff"/><rect x="845" y="279" width="1" height="3" fill="#fff"/><rect x="850" y="279" width="1" height="3" fill="#fff"/><rect x="854" y="279" width="1" height="3" fill="#fff"/><rect x="862" y="279" width="1" height="3" fill="#fff"/><rect x="866" y="279" width="1" height="3" fill="#fff"/><rect x="871" y="279" width="1" height="3" fill="#fff"/><rect x="875" y="279" width="1" height="3" fill="#fff"/><rect x="879" y="265" width="1" height="17" fill="#fff"/><rect x="37" y="279" width="1" height="3" fill="#fff"/><rect x="33" y="279" width="1" height="3" fill="#fff"/><rect x="28" y="279" width="1" height="3" fill="#fff"/><rect x="24" y="279" width="1" height="3" fill="#fff"/><rect x="2" y="961" width="19" height="1" fill="#fff"/><rect x="14" y="940" width="7" height="1" fill="#fff"/><rect x="17" y="957" width="4" height="1" fill="#fff"/><rect x="17" y="952" width="4" height="1" fill="#fff"/><rect x="17" y="948" width="4" height="1" fill="#fff"/><rect x="17" y="944" width="4" height="1" fill="#fff"/><rect x="17" y="936" width="4" height="1" fill="#fff"/><rect x="17" y="931" width="4" height="1" fill="#fff"/><rect x="17" y="927" width="4" height="1" fill="#fff"/><rect x="17" y="923" width="4" height="1" fill="#fff"/><rect x="2" y="919" width="19" height="1" fill="#fff"/><rect x="14" y="898" width="7" height="1" fill="#fff"/><rect x="17" y="915" width="4" height="1" fill="#fff"/><rect x="17" y="910" width="4" height="1" fill="#fff"/><rect x="17" y="906" width="4" height="1" fill="#fff"/><rect x="17" y="902" width="4" height="1" fill="#fff"/><rect x="17" y="894" width="4" height="1" fill="#fff"/><rect x="17" y="889" width="4" height="1" fill="#fff"/><rect x="17" y="885" width="4" height="1" fill="#fff"/><rect x="17" y="881" width="4" height="1" fill="#fff"/><rect x="2" y="877" width="19" height="1" fill="#fff"/><rect x="14" y="856" width="7" height="1" fill="#fff"/><rect x="17" y="873" width="4" height="1" fill="#fff"/><rect x="17" y="869" width="4" height="1" fill="#fff"/><rect x="17" y="864" width="4" height="1" fill="#fff"/><rect x="17" y="860" width="4" height="1" fill="#fff"/><rect x="17" y="852" width="4" height="1" fill="#fff"/><rect x="17" y="848" width="4" height="1" fill="#fff"/><rect x="17" y="843" width="4" height="1" fill="#fff"/><rect x="17" y="839" width="4" height="1" fill="#fff"/><rect x="2" y="835" width="19" height="1" fill="#fff"/><rect x="14" y="814" width="7" height="1" fill="#fff"/><rect x="17" y="831" width="4" height="1" fill="#fff"/><rect x="17" y="827" width="4" height="1" fill="#fff"/><rect x="17" y="822" width="4" height="1" fill="#fff"/><rect x="17" y="818" width="4" height="1" fill="#fff"/><rect x="17" y="810" width="4" height="1" fill="#fff"/><rect x="17" y="806" width="4" height="1" fill="#fff"/><rect x="17" y="801" width="4" height="1" fill="#fff"/><rect x="17" y="797" width="4" height="1" fill="#fff"/><rect x="2" y="793" width="19" height="1" fill="#fff"/><rect x="14" y="772" width="7" height="1" fill="#fff"/><rect x="17" y="789" width="4" height="1" fill="#fff"/><rect x="17" y="785" width="4" height="1" fill="#fff"/><rect x="17" y="781" width="4" height="1" fill="#fff"/><rect x="17" y="776" width="4" height="1" fill="#fff"/><rect x="17" y="768" width="4" height="1" fill="#fff"/><rect x="17" y="764" width="4" height="1" fill="#fff"/><rect x="17" y="760" width="4" height="1" fill="#fff"/><rect x="17" y="755" width="4" height="1" fill="#fff"/><rect x="2" y="751" width="19" height="1" fill="#fff"/><rect x="14" y="730" width="7" height="1" fill="#fff"/><rect x="17" y="747" width="4" height="1" fill="#fff"/><rect x="17" y="743" width="4" height="1" fill="#fff"/><rect x="17" y="739" width="4" height="1" fill="#fff"/><rect x="17" y="734" width="4" height="1" fill="#fff"/><rect x="17" y="726" width="4" height="1" fill="#fff"/><rect x="17" y="722" width="4" height="1" fill="#fff"/><rect x="17" y="718" width="4" height="1" fill="#fff"/><rect x="17" y="713" width="4" height="1" fill="#fff"/><rect x="2" y="709" width="19" height="1" fill="#fff"/><rect x="14" y="688" width="7" height="1" fill="#fff"/><rect x="17" y="705" width="4" height="1" fill="#fff"/><rect x="17" y="701" width="4" height="1" fill="#fff"/><rect x="17" y="697" width="4" height="1" fill="#fff"/><rect x="17" y="693" width="4" height="1" fill="#fff"/><rect x="17" y="684" width="4" height="1" fill="#fff"/><rect x="17" y="680" width="4" height="1" fill="#fff"/><rect x="17" y="676" width="4" height="1" fill="#fff"/><rect x="17" y="672" width="4" height="1" fill="#fff"/><rect x="2" y="667" width="19" height="1" fill="#fff"/><rect x="14" y="646" width="7" height="1" fill="#fff"/><rect x="17" y="663" width="4" height="1" fill="#fff"/><rect x="17" y="659" width="4" height="1" fill="#fff"/><rect x="17" y="655" width="4" height="1" fill="#fff"/><rect x="17" y="651" width="4" height="1" fill="#fff"/><rect x="17" y="642" width="4" height="1" fill="#fff"/><rect x="17" y="638" width="4" height="1" fill="#fff"/><rect x="17" y="634" width="4" height="1" fill="#fff"/><rect x="17" y="630" width="4" height="1" fill="#fff"/><rect x="2" y="626" width="19" height="1" fill="#fff"/><rect x="14" y="605" width="7" height="1" fill="#fff"/><rect x="17" y="621" width="4" height="1" fill="#fff"/><rect x="17" y="617" width="4" height="1" fill="#fff"/><rect x="17" y="613" width="4" height="1" fill="#fff"/><rect x="17" y="609" width="4" height="1" fill="#fff"/><rect x="17" y="600" width="4" height="1" fill="#fff"/><rect x="17" y="596" width="4" height="1" fill="#fff"/><rect x="17" y="592" width="4" height="1" fill="#fff"/><rect x="17" y="588" width="4" height="1" fill="#fff"/><rect x="2" y="584" width="19" height="1" fill="#fff"/><rect x="14" y="563" width="7" height="1" fill="#fff"/><rect x="17" y="579" width="4" height="1" fill="#fff"/><rect x="17" y="575" width="4" height="1" fill="#fff"/><rect x="17" y="571" width="4" height="1" fill="#fff"/><rect x="17" y="567" width="4" height="1" fill="#fff"/><rect x="17" y="558" width="4" height="1" fill="#fff"/><rect x="17" y="554" width="4" height="1" fill="#fff"/><rect x="17" y="550" width="4" height="1" fill="#fff"/><rect x="17" y="546" width="4" height="1" fill="#fff"/><rect x="2" y="542" width="19" height="1" fill="#fff"/><rect x="14" y="521" width="7" height="1" fill="#fff"/><rect x="17" y="538" width="4" height="1" fill="#fff"/><rect x="17" y="533" width="4" height="1" fill="#fff"/><rect x="17" y="529" width="4" height="1" fill="#fff"/><rect x="17" y="525" width="4" height="1" fill="#fff"/><rect x="17" y="517" width="4" height="1" fill="#fff"/><rect x="17" y="512" width="4" height="1" fill="#fff"/><rect x="17" y="508" width="4" height="1" fill="#fff"/><rect x="17" y="504" width="4" height="1" fill="#fff"/><rect x="2" y="500" width="19" height="1" fill="#fff"/><rect x="14" y="479" width="7" height="1" fill="#fff"/><rect x="17" y="496" width="4" height="1" fill="#fff"/><rect x="17" y="491" width="4" height="1" fill="#fff"/><rect x="17" y="487" width="4" height="1" fill="#fff"/><rect x="17" y="483" width="4" height="1" fill="#fff"/><rect x="17" y="475" width="4" height="1" fill="#fff"/><rect x="17" y="470" width="4" height="1" fill="#fff"/><rect x="17" y="466" width="4" height="1" fill="#fff"/><rect x="17" y="462" width="4" height="1" fill="#fff"/><rect x="2" y="458" width="19" height="1" fill="#fff"/><rect x="14" y="437" width="7" height="1" fill="#fff"/><rect x="17" y="454" width="4" height="1" fill="#fff"/><rect x="17" y="450" width="4" height="1" fill="#fff"/><rect x="17" y="445" width="4" height="1" fill="#fff"/><rect x="17" y="441" width="4" height="1" fill="#fff"/><rect x="17" y="433" width="4" height="1" fill="#fff"/><rect x="17" y="429" width="4" height="1" fill="#fff"/><rect x="17" y="424" width="4" height="1" fill="#fff"/><rect x="17" y="420" width="4" height="1" fill="#fff"/><rect x="2" y="416" width="19" height="1" fill="#fff"/><rect x="14" y="395" width="7" height="1" fill="#fff"/><rect x="17" y="412" width="4" height="1" fill="#fff"/><rect x="17" y="408" width="4" height="1" fill="#fff"/><rect x="17" y="403" width="4" height="1" fill="#fff"/><rect x="17" y="399" width="4" height="1" fill="#fff"/><rect x="17" y="391" width="4" height="1" fill="#fff"/><rect x="17" y="387" width="4" height="1" fill="#fff"/><rect x="17" y="382" width="4" height="1" fill="#fff"/><rect x="17" y="378" width="4" height="1" fill="#fff"/><rect x="2" y="374" width="19" height="1" fill="#fff"/><rect x="14" y="353" width="7" height="1" fill="#fff"/><rect x="17" y="370" width="4" height="1" fill="#fff"/><rect x="17" y="366" width="4" height="1" fill="#fff"/><rect x="17" y="362" width="4" height="1" fill="#fff"/><rect x="17" y="357" width="4" height="1" fill="#fff"/><rect x="17" y="349" width="4" height="1" fill="#fff"/><rect x="17" y="345" width="4" height="1" fill="#fff"/><rect x="17" y="341" width="4" height="1" fill="#fff"/><rect x="17" y="336" width="4" height="1" fill="#fff"/><rect x="2" y="332" width="19" height="1" fill="#fff"/><rect x="14" y="311" width="7" height="1" fill="#fff"/><rect x="17" y="328" width="4" height="1" fill="#fff"/><rect x="17" y="324" width="4" height="1" fill="#fff"/><rect x="17" y="320" width="4" height="1" fill="#fff"/><rect x="17" y="315" width="4" height="1" fill="#fff"/><rect x="17" y="307" width="4" height="1" fill="#fff"/><rect x="17" y="303" width="4" height="1" fill="#fff"/><rect x="17" y="299" width="4" height="1" fill="#fff"/><rect x="17" y="294" width="4" height="1" fill="#fff"/><rect x="2" y="290" width="19" height="1" fill="#fff"/><rect x="17" y="286" width="4" height="1" fill="#fff"/></svg>
<div style="left:41.2px;top:265.79px;font-size:12.5px;line-height:12.5px;color:#a0a0a0;letter-spacing:-0.95px;">-500</div>
<div style="left:83.2px;top:265.79px;font-size:12.5px;line-height:12.5px;color:#a0a0a0;letter-spacing:-0.95px;">-450</div>
<div style="left:125.2px;top:265.79px;font-size:12.5px;line-height:12.5px;color:#a0a0a0;letter-spacing:-0.95px;">-400</div>
<div style="left:167.2px;top:265.79px;font-size:12.5px;line-height:12.5px;color:#a0a0a0;letter-spacing:-0.95px;">-350</div>
<div style="left:209.2px;top:265.79px;font-size:12.5px;line-height:12.5px;color:#a0a0a0;letter-spacing:-0.95px;">-300</div>
<div style="left:250.2px;top:265.79px;font-size:12.5px;line-height:12.5px;color:#a0a0a0;letter-spacing:-0.95px;">-250</div>
<div style="left:292.2px;top:265.79px;font-size:12.5px;line-height:12.5px;color:#a0a0a0;letter-spacing:-0.95px;">-200</div>
<div style="left:334.2px;top:265.79px;font-size:12.5px;line-height:12.5px;color:#a0a0a0;letter-spacing:-0.95px;">-150</div>
<div style="left:376.2px;top:265.79px;font-size:12.5px;line-height:12.5px;color:#a0a0a0;letter-spacing:-0.95px;">-100</div>
<div style="left:418.2px;top:265.79px;font-size:12.5px;line-height:12.5px;color:#a0a0a0;letter-spacing:-0.95px;">-50</div>
<div style="left:460.2px;top:265.79px;font-size:12.5px;line-height:12.5px;color:#a0a0a0;letter-spacing:-0.95px;">0</div>
<div style="left:502.2px;top:265.79px;font-size:12.5px;line-height:12.5px;color:#a0a0a0;letter-spacing:-0.95px;">50</div>
<div style="left:544.2px;top:265.79px;font-size:12.5px;line-height:12.5px;color:#a0a0a0;letter-spacing:-0.95px;">100</div>
<div style="left:586.2px;top:265.79px;font-size:12.5px;line-height:12.5px;color:#a0a0a0;letter-spacing:-0.95px;">150</div>
<div style="left:628.2px;top:265.79px;font-size:12.5px;line-height:12.5px;color:#a0a0a0;letter-spacing:-0.95px;">200</div>
<div style="left:670.2px;top:265.79px;font-size:12.5px;line-height:12.5px;color:#a0a0a0;letter-spacing:-0.95px;">250</div>
<div style="left:711.2px;top:265.79px;font-size:12.5px;line-height:12.5px;color:#a0a0a0;letter-spacing:-0.95px;">300</div>
<div style="left:753.2px;top:265.79px;font-size:12.5px;line-height:12.5px;color:#a0a0a0;letter-spacing:-0.95px;">350</div>
<div style="left:795.2px;top:265.79px;font-size:12.5px;line-height:12.5px;color:#a0a0a0;letter-spacing:-0.95px;">400</div>
<div style="left:837.2px;top:265.79px;font-size:12.5px;line-height:12.5px;color:#a0a0a0;letter-spacing:-0.95px;">450</div>
<div style="left:879.2px;top:265.79px;font-size:12.5px;line-height:12.5px;color:#a0a0a0;letter-spacing:-0.95px;">500</div>
<div style="left:5.5px;top:961.33px;font-size:11px;line-height:11px;color:#a0a0a0;">-</div>
<div style="left:5.5px;top:919.43px;font-size:11px;line-height:11px;color:#a0a0a0;">-</div>
<div style="left:4.3px;top:929.59px;font-size:12.5px;line-height:12.5px;color:#a0a0a0;transform:scaleX(0.85);transform-origin:0 0;">3</div>
<div style="left:4.3px;top:940.59px;font-size:12.5px;line-height:12.5px;color:#a0a0a0;transform:scaleX(0.85);transform-origin:0 0;">5</div>
<div style="left:4.3px;top:951.59px;font-size:12.5px;line-height:12.5px;color:#a0a0a0;transform:scaleX(0.85);transform-origin:0 0;">0</div>
<div style="left:5.5px;top:877.53px;font-size:11px;line-height:11px;color:#a0a0a0;">-</div>
<div style="left:4.3px;top:887.69px;font-size:12.5px;line-height:12.5px;color:#a0a0a0;transform:scaleX(0.85);transform-origin:0 0;">3</div>
<div style="left:4.3px;top:898.69px;font-size:12.5px;line-height:12.5px;color:#a0a0a0;transform:scaleX(0.85);transform-origin:0 0;">0</div>
<div style="left:4.3px;top:909.69px;font-size:12.5px;line-height:12.5px;color:#a0a0a0;transform:scaleX(0.85);transform-origin:0 0;">0</div>
<div style="left:5.5px;top:835.63px;font-size:11px;line-height:11px;color:#a0a0a0;">-</div>
<div style="left:4.3px;top:845.79px;font-size:12.5px;line-height:12.5px;color:#a0a0a0;transform:scaleX(0.85);transform-origin:0 0;">2</div>
<div style="left:4.3px;top:856.79px;font-size:12.5px;line-height:12.5px;color:#a0a0a0;transform:scaleX(0.85);transform-origin:0 0;">5</div>
<div style="left:4.3px;top:867.79px;font-size:12.5px;line-height:12.5px;color:#a0a0a0;transform:scaleX(0.85);transform-origin:0 0;">0</div>
<div style="left:5.5px;top:793.73px;font-size:11px;line-height:11px;color:#a0a0a0;">-</div>
<div style="left:4.3px;top:803.89px;font-size:12.5px;line-height:12.5px;color:#a0a0a0;transform:scaleX(0.85);transform-origin:0 0;">2</div>
<div style="left:4.3px;top:814.89px;font-size:12.5px;line-height:12.5px;color:#a0a0a0;transform:scaleX(0.85);transform-origin:0 0;">0</div>
<div style="left:4.3px;top:825.89px;font-size:12.5px;line-height:12.5px;color:#a0a0a0;transform:scaleX(0.85);transform-origin:0 0;">0</div>
<div style="left:5.5px;top:751.83px;font-size:11px;line-height:11px;color:#a0a0a0;">-</div>
<div style="left:4.3px;top:761.99px;font-size:12.5px;line-height:12.5px;color:#a0a0a0;transform:scaleX(0.85);transform-origin:0 0;">1</div>
<div style="left:4.3px;top:772.99px;font-size:12.5px;line-height:12.5px;color:#a0a0a0;transform:scaleX(0.85);transform-origin:0 0;">5</div>
<div style="left:4.3px;top:783.99px;font-size:12.5px;line-height:12.5px;color:#a0a0a0;transform:scaleX(0.85);transform-origin:0 0;">0</div>
<div style="left:5.5px;top:709.93px;font-size:11px;line-height:11px;color:#a0a0a0;">-</div>
<div style="left:4.3px;top:720.09px;font-size:12.5px;line-height:12.5px;color:#a0a0a0;transform:scaleX(0.85);transform-origin:0 0;">1</div>
<div style="left:4.3px;top:731.09px;font-size:12.5px;line-height:12.5px;color:#a0a0a0;transform:scaleX(0.85);transform-origin:0 0;">0</div>
<div style="left:4.3px;top:742.09px;font-size:12.5px;line-height:12.5px;color:#a0a0a0;transform:scaleX(0.85);transform-origin:0 0;">0</div>
<div style="left:5.5px;top:668.03px;font-size:11px;line-height:11px;color:#a0a0a0;">-</div>
<div style="left:4.3px;top:678.19px;font-size:12.5px;line-height:12.5px;color:#a0a0a0;transform:scaleX(0.85);transform-origin:0 0;">5</div>
<div style="left:4.3px;top:689.19px;font-size:12.5px;line-height:12.5px;color:#a0a0a0;transform:scaleX(0.85);transform-origin:0 0;">0</div>
<div style="left:4.3px;top:625.79px;font-size:12.5px;line-height:12.5px;color:#a0a0a0;transform:scaleX(0.85);transform-origin:0 0;">0</div>
<div style="left:4.3px;top:583.89px;font-size:12.5px;line-height:12.5px;color:#a0a0a0;transform:scaleX(0.85);transform-origin:0 0;">5</div>
<div style="left:4.3px;top:594.89px;font-size:12.5px;line-height:12.5px;color:#a0a0a0;transform:scaleX(0.85);transform-origin:0 0;">0</div>
<div style="left:4.3px;top:541.99px;font-size:12.5px;line-height:12.5px;color:#a0a0a0;transform:scaleX(0.85);transform-origin:0 0;">1</div>
<div style="left:4.3px;top:552.99px;font-size:12.5px;line-height:12.5px;color:#a0a0a0;transform:scaleX(0.85);transform-origin:0 0;">0</div>
<div style="left:4.3px;top:563.99px;font-size:12.5px;line-height:12.5px;color:#a0a0a0;transform:scaleX(0.85);transform-origin:0 0;">0</div>
<div style="left:4.3px;top:500.09px;font-size:12.5px;line-height:12.5px;color:#a0a0a0;transform:scaleX(0.85);transform-origin:0 0;">1</div>
<div style="left:4.3px;top:511.09px;font-size:12.5px;line-height:12.5px;color:#a0a0a0;transform:scaleX(0.85);transform-origin:0 0;">5</div>
<div style="left:4.3px;top:522.09px;font-size:12.5px;line-height:12.5px;color:#a0a0a0;transform:scaleX(0.85);transform-origin:0 0;">0</div>
<div style="left:4.3px;top:458.19px;font-size:12.5px;line-height:12.5px;color:#a0a0a0;transform:scaleX(0.85);transform-origin:0 0;">2</div>
<div style="left:4.3px;top:469.19px;font-size:12.5px;line-height:12.5px;color:#a0a0a0;transform:scaleX(0.85);transform-origin:0 0;">0</div>
<div style="left:4.3px;top:480.19px;font-size:12.5px;line-height:12.5px;color:#a0a0a0;transform:scaleX(0.85);transform-origin:0 0;">0</div>
<div style="left:4.3px;top:416.29px;font-size:12.5px;line-height:12.5px;color:#a0a0a0;transform:scaleX(0.85);transform-origin:0 0;">2</div>
<div style="left:4.3px;top:427.29px;font-size:12.5px;line-height:12.5px;color:#a0a0a0;transform:scaleX(0.85);transform-origin:0 0;">5</div>
<div style="left:4.3px;top:438.29px;font-size:12.5px;line-height:12.5px;color:#a0a0a0;transform:scaleX(0.85);transform-origin:0 0;">0</div>
<div style="left:4.3px;top:374.39px;font-size:12.5px;line-height:12.5px;color:#a0a0a0;transform:scaleX(0.85);transform-origin:0 0;">3</div>
<div style="left:4.3px;top:385.39px;font-size:12.5px;line-height:12.5px;color:#a0a0a0;transform:scaleX(0.85);transform-origin:0 0;">0</div>
<div style="left:4.3px;top:396.39px;font-size:12.5px;line-height:12.5px;color:#a0a0a0;transform:scaleX(0.85);transform-origin:0 0;">0</div>
<div style="left:4.3px;top:332.49px;font-size:12.5px;line-height:12.5px;color:#a0a0a0;transform:scaleX(0.85);transform-origin:0 0;">3</div>
<div style="left:4.3px;top:343.49px;font-size:12.5px;line-height:12.5px;color:#a0a0a0;transform:scaleX(0.85);transform-origin:0 0;">5</div>
<div style="left:4.3px;top:354.49px;font-size:12.5px;line-height:12.5px;color:#a0a0a0;transform:scaleX(0.85);transform-origin:0 0;">0</div>
<div style="left:4.3px;top:290.59px;font-size:12.5px;line-height:12.5px;color:#a0a0a0;transform:scaleX(0.85);transform-origin:0 0;">4</div>
<div style="left:4.3px;top:301.59px;font-size:12.5px;line-height:12.5px;color:#a0a0a0;transform:scaleX(0.85);transform-origin:0 0;">0</div>
<div style="left:4.3px;top:312.59px;font-size:12.5px;line-height:12.5px;color:#a0a0a0;transform:scaleX(0.85);transform-origin:0 0;">0</div>
<div style="left:21px;top:282px;width:878px;height:1px;background:#a09a88;"></div>
<div style="left:21px;top:282px;width:1px;height:687px;background:#a09a88;"></div>
<div style="left:22px;top:283px;width:877px;height:686px;background:linear-gradient(#000080,#000040);"></div>
<svg style="left:22px;top:283px" width="877" height="686" viewBox="22 283 877 686" shape-rendering="crispEdges"><line x1="804.5" y1="467.5" x2="458" y2="665" stroke="#008a00" stroke-width="1"/><line x1="804.5" y1="467.5" x2="905" y2="524.9458" stroke="#008a00" stroke-width="1"/><line x1="804.5" y1="428" x2="804.5" y2="467.5" stroke="#008a00" stroke-width="1"/><line x1="804.5" y1="428" x2="458" y2="625" stroke="#00ff00" stroke-width="1"/><line x1="804.5" y1="428" x2="905" y2="485.4458" stroke="#00ff00" stroke-width="1"/><line x1="458" y1="625" x2="685.5" y2="755.5" stroke="#00ff00" stroke-width="1"/><line x1="685.5" y1="755.5" x2="905" y2="630.0338" stroke="#00ff00" stroke-width="1"/><line x1="458" y1="665" x2="685.5" y2="795.5" stroke="#00ff00" stroke-width="1"/><line x1="685.5" y1="795.5" x2="905" y2="670.0338" stroke="#00ff00" stroke-width="1"/><line x1="685.5" y1="755.5" x2="685.5" y2="795.5" stroke="#00ff00" stroke-width="1"/><path d="M460 558 L579 627 L579 641 L461 708 L341 641 L341 626 Z" fill="#808080"/><defs><pattern id="dith" x="0" y="0" width="2" height="2" patternUnits="userSpaceOnUse"><rect x="0" y="0" width="1" height="1" fill="#000080"/></pattern><pattern id="dith2" x="0" y="0" width="3" height="3" patternUnits="userSpaceOnUse"><rect x="0" y="0" width="1" height="1" fill="#000080"/><rect x="1" y="2" width="1" height="1" fill="#000080"/></pattern></defs><path d="M341 641 L461 707.5 L579 641" fill="none" stroke="url(#dith)" stroke-width="3"/><path d="M341 626.5 L460 558.5 L579 627 L579 641" fill="none" stroke="url(#dith2)" stroke-width="3"/><rect x="348" y="639" width="1" height="1" fill="#000080"/><rect x="389" y="660" width="1" height="1" fill="#000080"/><rect x="383" y="642" width="1" height="1" fill="#000080"/><rect x="417" y="633" width="1" height="1" fill="#000080"/><rect x="407" y="635" width="1" height="1" fill="#000080"/><rect x="358" y="638" width="1" height="1" fill="#000080"/><rect x="344" y="636" width="1" height="1" fill="#000080"/><rect x="427" y="613" width="1" height="1" fill="#000080"/><rect x="385" y="664" width="1" height="1" fill="#000080"/><rect x="448" y="614" width="1" height="1" fill="#000080"/><rect x="410" y="650" width="1" height="1" fill="#000080"/><rect x="370" y="628" width="1" height="1" fill="#000080"/><rect x="371" y="629" width="1" height="1" fill="#000080"/><rect x="399" y="628" width="1" height="1" fill="#000080"/><rect x="422" y="616" width="1" height="1" fill="#000080"/><rect x="434" y="619" width="1" height="1" fill="#000080"/><rect x="370" y="633" width="1" height="1" fill="#000080"/><rect x="430" y="616" width="1" height="1" fill="#000080"/><rect x="353" y="642" width="1" height="1" fill="#000080"/><rect x="435" y="614" width="1" height="1" fill="#000080"/><rect x="390" y="639" width="1" height="1" fill="#000080"/><rect x="411" y="639" width="1" height="1" fill="#000080"/><rect x="405" y="652" width="1" height="1" fill="#000080"/><rect x="412" y="659" width="1" height="1" fill="#000080"/><rect x="400" y="620" width="1" height="1" fill="#000080"/><rect x="394" y="668" width="1" height="1" fill="#000080"/><rect x="418" y="671" width="1" height="1" fill="#000080"/><rect x="387" y="628" width="1" height="1" fill="#000080"/><rect x="359" y="635" width="1" height="1" fill="#000080"/><rect x="376" y="628" width="1" height="1" fill="#000080"/><rect x="384" y="636" width="1" height="1" fill="#000080"/><rect x="364" y="639" width="1" height="1" fill="#000080"/><rect x="432" y="614" width="1" height="1" fill="#000080"/><rect x="418" y="651" width="1" height="1" fill="#000080"/><rect x="417" y="638" width="1" height="1" fill="#000080"/><rect x="401" y="649" width="1" height="1" fill="#000080"/><rect x="371" y="654" width="1" height="1" fill="#000080"/><rect x="370" y="655" width="1" height="1" fill="#000080"/><rect x="393" y="636" width="1" height="1" fill="#000080"/><rect x="446" y="605" width="1" height="1" fill="#000080"/><rect x="365" y="644" width="1" height="1" fill="#000080"/><rect x="400" y="669" width="1" height="1" fill="#000080"/><rect x="396" y="635" width="1" height="1" fill="#000080"/><rect x="407" y="629" width="1" height="1" fill="#000080"/><rect x="445" y="613" width="1" height="1" fill="#000080"/><rect x="400" y="630" width="1" height="1" fill="#000080"/><rect x="449" y="613" width="1" height="1" fill="#000080"/><rect x="412" y="663" width="1" height="1" fill="#000080"/><rect x="366" y="645" width="1" height="1" fill="#000080"/><rect x="358" y="631" width="1" height="1" fill="#000080"/><rect x="450" y="614" width="1" height="1" fill="#000080"/><rect x="416" y="630" width="1" height="1" fill="#000080"/><rect x="427" y="607" width="1" height="1" fill="#000080"/><rect x="377" y="623" width="1" height="1" fill="#000080"/><rect x="447" y="606" width="1" height="1" fill="#000080"/><rect x="385" y="621" width="1" height="1" fill="#000080"/><rect x="396" y="667" width="1" height="1" fill="#000080"/><rect x="345" y="642" width="1" height="1" fill="#000080"/><rect x="391" y="620" width="1" height="1" fill="#000080"/><rect x="383" y="654" width="1" height="1" fill="#000080"/><rect x="414" y="672" width="1" height="1" fill="#000080"/><rect x="443" y="607" width="1" height="1" fill="#000080"/><rect x="378" y="650" width="1" height="1" fill="#000080"/><rect x="419" y="632" width="1" height="1" fill="#000080"/><rect x="383" y="638" width="1" height="1" fill="#000080"/><rect x="411" y="660" width="1" height="1" fill="#000080"/><rect x="429" y="619" width="1" height="1" fill="#000080"/><rect x="366" y="631" width="1" height="1" fill="#000080"/><rect x="404" y="656" width="1" height="1" fill="#000080"/><rect x="403" y="647" width="1" height="1" fill="#000080"/><rect x="388" y="644" width="1" height="1" fill="#000080"/><rect x="445" y="609" width="1" height="1" fill="#000080"/><rect x="407" y="649" width="1" height="1" fill="#000080"/><rect x="399" y="665" width="1" height="1" fill="#000080"/><rect x="367" y="649" width="1" height="1" fill="#000080"/><rect x="406" y="644" width="1" height="1" fill="#000080"/><rect x="411" y="636" width="1" height="1" fill="#000080"/><rect x="446" y="614" width="1" height="1" fill="#000080"/><rect x="432" y="616" width="1" height="1" fill="#000080"/><rect x="392" y="620" width="1" height="1" fill="#000080"/><path d="M424.8 606.6 L431.8 605.2 L441.2 607.2 L446.4 610.1 L449.4 612.4 L444.1 614.2 L436.5 613.0 L427.1 611.3 L420.1 610.1 Z" fill="#000080"/><path d="M395.4 618.9 L400.1 617.1 L404.8 618.3 L403.7 621.2 L396.6 621.8 Z" fill="#000080"/><path d="M381.4 625.3 L389.6 624.4 L396.6 626.5 L394.3 631.2 L387.2 634.7 L379.0 633.5 L376.7 631.2 Z" fill="#000080"/><path d="M390.8 636.5 L399.0 635.9 L401.9 638.8 L394.3 639.6 Z" fill="#000080"/><line x1="341.5" y1="625.3" x2="459.9" y2="557.9" stroke="#00a0a0" stroke-width="1"/><line x1="345.0" y1="624.2" x2="455.2" y2="559.7" stroke="#00a0a0" stroke-width="1"/><line x1="422.4" y1="589.0" x2="455.2" y2="562.0" stroke="#00a0a0" stroke-width="1"/><line x1="403.7" y1="599.5" x2="416.5" y2="584.3" stroke="#00a0a0" stroke-width="1"/><line x1="408.3" y1="593.7" x2="415.4" y2="585.5" stroke="#00a0a0" stroke-width="1"/><line x1="405.4" y1="609.5" x2="433.0" y2="602.5" stroke="#00a0a0" stroke-width="1"/><line x1="342.7" y1="625.3" x2="373.2" y2="618.3" stroke="#00a0a0" stroke-width="1"/><line x1="369.7" y1="638.2" x2="413.0" y2="664.6" stroke="#00a0a0" stroke-width="1"/><line x1="369.7" y1="639.4" x2="406.0" y2="654.6" stroke="#00a0a0" stroke-width="1"/><line x1="370.2" y1="638.2" x2="370.2" y2="648.8" stroke="#00a0a0" stroke-width="1"/><line x1="379.0" y1="637.1" x2="416.5" y2="642.9" stroke="#00a0a0" stroke-width="1"/><line x1="405.4" y1="642.9" x2="405.4" y2="650.0" stroke="#00a0a0" stroke-width="1"/><line x1="416.5" y1="642.9" x2="416.5" y2="650.0" stroke="#00a0a0" stroke-width="1"/><line x1="408.3" y1="613.6" x2="431.8" y2="648.8" stroke="#00a0a0" stroke-width="1"/><line x1="423.6" y1="607.8" x2="424.8" y2="645.3" stroke="#00a0a0" stroke-width="1"/><line x1="438.2" y1="606.6" x2="438.8" y2="627.7" stroke="#00a0a0" stroke-width="1"/><line x1="444.1" y1="606.6" x2="444.1" y2="630.0" stroke="#00a0a0" stroke-width="1"/><line x1="396.6" y1="630.0" x2="436.5" y2="621.8" stroke="#00a0a0" stroke-width="1"/><line x1="384.9" y1="623.0" x2="414.2" y2="624.2" stroke="#00a0a0" stroke-width="1"/><line x1="413.0" y1="623.0" x2="403.7" y2="637.1" stroke="#00a0a0" stroke-width="1"/><line x1="428.3" y1="574.9" x2="429.4" y2="583.1" stroke="#00a0a0" stroke-width="1"/><line x1="431.8" y1="590.2" x2="456.4" y2="675.0" stroke="#00a0a0" stroke-width="1"/><line x1="361.4" y1="634.7" x2="399.0" y2="637.1" stroke="#00a0a0" stroke-width="1"/><line x1="387.2" y1="620.7" x2="414.2" y2="625.3" stroke="#00a0a0" stroke-width="1"/><line x1="399.0" y1="627.7" x2="420.1" y2="627.7" stroke="#00a0a0" stroke-width="1"/><line x1="373.2" y1="630.0" x2="408.3" y2="637.1" stroke="#00a0a0" stroke-width="1"/><line x1="410.7" y1="616.0" x2="420.1" y2="627.7" stroke="#00a0a0" stroke-width="1"/><line x1="451.1" y1="605.4" x2="451.1" y2="607.8" stroke="#00a0a0" stroke-width="1"/><line x1="441.2" y1="576.1" x2="442.3" y2="583.1" stroke="#00a0a0" stroke-width="1"/><line x1="459.9" y1="557.9" x2="459.9" y2="653.5" stroke="#00a0a0" stroke-width="1"/><line x1="456.5" y1="675" x2="462" y2="707" stroke="#00a0a0" stroke-width="1"/><line x1="455" y1="626.5" x2="464" y2="626.5" stroke="#d020d0" stroke-width="1"/><line x1="459.5" y1="622" x2="459.5" y2="631" stroke="#8040c0" stroke-width="1"/><line x1="72.5" y1="899" x2="72.5" y2="920" stroke="#00ff00" stroke-width="1.2"/><path d="M72 897.5 L81 897.5 L73 906.5 L81 906.5" fill="none" stroke="#00ff00" stroke-width="1.2"/><line x1="73" y1="919" x2="88" y2="909.5" stroke="#008a00" stroke-width="1.2"/><line x1="73" y1="920.5" x2="88" y2="928.5" stroke="#00ff00" stroke-width="1.2"/><path d="M93.5 910 L98 914 L102.5 910 M98 914 L98 919" fill="none" stroke="#008a00" stroke-width="2"/><path d="M93.5 935 L102 943.5 M102 935 L93.5 943.5" fill="none" stroke="#00ff00" stroke-width="2"/></svg>
<div style="left:30.14px;top:293.29px;font-size:12.5px;line-height:12.5px;color:#00ff00;font-weight:bold;letter-spacing:0.583px;">Simulation</div>
<div style="left:908px;top:240px;width:1px;height:734px;background:#a0a0a0;"></div>
<div style="left:908px;top:240px;width:371px;height:1px;background:#a0a0a0;"></div>
<div style="left:1278px;top:240px;width:1px;height:734px;background:#a0a0a0;"></div>
<div style="left:908px;top:973px;width:371px;height:1px;background:#a0a0a0;"></div>
<div style="left:909px;top:241px;width:369px;height:1px;background:#fff;"></div>
<div style="left:909px;top:241px;width:1px;height:732px;background:#fff;"></div>
<div style="left:908px;top:974px;width:372px;height:1px;background:#fff;"></div>
<div style="left:910px;top:242px;width:368px;height:20px;background:#98b0cc;"></div>
<svg style="left:0;top:0" width="1280" height="270"><path d="M965 245 L1004 245 L1019 262 L965 262 Z" fill="#f3f3f3"/><path d="M965.5 262 L965.5 245.5 L1004 245.5" fill="none" stroke="#a0a0a0" stroke-width="1"/><path d="M965.5 245.5 L1004 245.5" fill="none" stroke="#fff" stroke-width="1"/><path d="M965 261.5 L1019 261.5" fill="none" stroke="#a0a0a0" stroke-width="1"/><path d="M1004 245 L1019.5 261.5" fill="none" stroke="#a0a0a0" stroke-width="1.1"/><path d="M916 245 L956 245 L971 262 L916 262 Z" fill="#f3f3f3"/><path d="M916.5 262 L916.5 245.5 L956 245.5" fill="none" stroke="#fff" stroke-width="1"/><path d="M956 245 L971.5 261.5" fill="none" stroke="#a0a0a0" stroke-width="1.1"/></svg>
<div style="left:923.98px;top:247.13px;font-size:11px;line-height:11px;color:#000;letter-spacing:-0.437px;">AUTO</div>
<div style="left:971.60px;top:247.13px;font-size:11px;line-height:11px;color:#a0a0a0;letter-spacing:-0.065px;">MA...</div>
<div style="left:920px;top:273px;width:347px;height:689px;background:#fff;"></div>
<div style="left:920px;top:273px;width:347px;height:1px;background:#a0a0a0;"></div>
<div style="left:920px;top:273px;width:1px;height:689px;background:#a0a0a0;"></div>
<div style="left:1267px;top:273px;width:1px;height:690px;background:#fff;"></div>
<div style="left:920px;top:962px;width:348px;height:1px;background:#fff;"></div>
<div style="left:921px;top:273px;width:330px;height:689px;overflow:hidden;"><div style="position:absolute;left:3.9px;top:3.99px;font-size:12.5px;line-height:12.5px;letter-spacing:0.1px;">%</div><div style="position:absolute;left:3.9px;top:20.99px;font-size:12.5px;line-height:12.5px;letter-spacing:0.1px;">:1248</div><div style="position:absolute;left:3.9px;top:37.99px;font-size:12.5px;line-height:12.5px;letter-spacing:0.1px;">N20G91G28X0Y0Z0</div><div style="position:absolute;left:3.9px;top:54.99px;font-size:12.5px;line-height:12.5px;letter-spacing:0.1px;">N30G40G17G80G49</div><div style="position:absolute;left:3.9px;top:71.99px;font-size:12.5px;line-height:12.5px;letter-spacing:0.1px;">N40T1M6</div><div style="position:absolute;left:3.9px;top:88.99px;font-size:12.5px;line-height:12.5px;letter-spacing:0.1px;">N50G90G54</div><div style="position:absolute;left:3.9px;top:105.99px;font-size:12.5px;line-height:12.5px;letter-spacing:0.1px;">N60G43Z40.256H1</div><div style="position:absolute;left:3.9px;top:122.99px;font-size:12.5px;line-height:12.5px;letter-spacing:0.1px;">N70G0X0.000Y0.000S15000M3</div><div style="position:absolute;left:3.9px;top:139.99px;font-size:12.5px;line-height:12.5px;letter-spacing:0.1px;">N80G0X-99.951Y-100.000Z40.256</div><div style="position:absolute;left:3.9px;top:156.99px;font-size:12.5px;line-height:12.5px;letter-spacing:0.1px;">N90G1Z38.151F3000.0</div><div style="position:absolute;left:3.9px;top:173.99px;font-size:12.5px;line-height:12.5px;letter-spacing:0.1px;">N100G1X99.951F4560.0</div><div style="position:absolute;left:3.9px;top:190.99px;font-size:12.5px;line-height:12.5px;letter-spacing:0.1px;">N110X100.000Y-99.951</div><div style="position:absolute;left:3.9px;top:207.99px;font-size:12.5px;line-height:12.5px;letter-spacing:0.1px;">N120Y-98.000</div><div style="position:absolute;left:3.9px;top:224.99px;font-size:12.5px;line-height:12.5px;letter-spacing:0.1px;">N130X-100.000</div><div style="position:absolute;left:3.9px;top:241.99px;font-size:12.5px;line-height:12.5px;letter-spacing:0.1px;">N140Y-96.000</div><div style="position:absolute;left:3.9px;top:258.99px;font-size:12.5px;line-height:12.5px;letter-spacing:0.1px;">N150X100.000Y-96.000</div><div style="position:absolute;left:3.9px;top:275.99px;font-size:12.5px;line-height:12.5px;letter-spacing:0.1px;">N160Y-94.000</div><div style="position:absolute;left:3.9px;top:292.99px;font-size:12.5px;line-height:12.5px;letter-spacing:0.1px;">N170X-100.000Y-94.000</div><div style="position:absolute;left:3.9px;top:309.99px;font-size:12.5px;line-height:12.5px;letter-spacing:0.1px;">N180Y-92.000</div><div style="position:absolute;left:3.9px;top:326.99px;font-size:12.5px;line-height:12.5px;letter-spacing:0.1px;">N190X100.000Y-92.000</div><div style="position:absolute;left:3.9px;top:343.99px;font-size:12.5px;line-height:12.5px;letter-spacing:0.1px;">N200Y-90.000</div><div style="position:absolute;left:3.9px;top:360.99px;font-size:12.5px;line-height:12.5px;letter-spacing:0.1px;">N210X-100.000</div><div style="position:absolute;left:3.9px;top:377.99px;font-size:12.5px;line-height:12.5px;letter-spacing:0.1px;">N220Y-88.000</div><div style="position:absolute;left:3.9px;top:394.99px;font-size:12.5px;line-height:12.5px;letter-spacing:0.1px;">N230X100.000Y-88.000</div><div style="position:absolute;left:3.9px;top:411.99px;font-size:12.5px;line-height:12.5px;letter-spacing:0.1px;">N240Y-86.000</div><div style="position:absolute;left:3.9px;top:428.99px;font-size:12.5px;line-height:12.5px;letter-spacing:0.1px;">N250X-100.000</div><div style="position:absolute;left:3.9px;top:445.99px;font-size:12.5px;line-height:12.5px;letter-spacing:0.1px;">N260Y-84.000</div><div style="position:absolute;left:3.9px;top:462.99px;font-size:12.5px;line-height:12.5px;letter-spacing:0.1px;">N270X100.000Y-84.000</div><div style="position:absolute;left:3.9px;top:479.99px;font-size:12.5px;line-height:12.5px;letter-spacing:0.1px;">N280Y-82.000</div><div style="position:absolute;left:3.9px;top:496.99px;font-size:12.5px;line-height:12.5px;letter-spacing:0.1px;">N290X-66.679Y-82.000</div><div style="position:absolute;left:3.9px;top:513.99px;font-size:12.5px;line-height:12.5px;letter-spacing:0.1px;">N300X-66.683Y-82.004</div><div style="position:absolute;left:3.9px;top:530.99px;font-size:12.5px;line-height:12.5px;letter-spacing:0.1px;">N310X-67.656</div><div style="position:absolute;left:3.9px;top:547.99px;font-size:12.5px;line-height:12.5px;letter-spacing:0.1px;">N320X-67.753Y-82.101</div><div style="position:absolute;left:3.9px;top:564.99px;font-size:12.5px;line-height:12.5px;letter-spacing:0.1px;">N330X-67.947</div><div style="position:absolute;left:3.9px;top:581.99px;font-size:12.5px;line-height:12.5px;letter-spacing:0.1px;">N340X-68.045Y-82.198</div><div style="position:absolute;left:3.9px;top:598.99px;font-size:12.5px;line-height:12.5px;letter-spacing:0.1px;">N350X-69.309</div><div style="position:absolute;left:3.9px;top:615.99px;font-size:12.5px;line-height:12.5px;letter-spacing:0.1px;">N360X-69.407Y-82.101</div><div style="position:absolute;left:3.9px;top:632.99px;font-size:12.5px;line-height:12.5px;letter-spacing:0.1px;">N370X-69.601</div><div style="position:absolute;left:3.9px;top:649.99px;font-size:12.5px;line-height:12.5px;letter-spacing:0.1px;">N380X-69.698Y-82.004</div><div style="position:absolute;left:3.9px;top:666.99px;font-size:12.5px;line-height:12.5px;letter-spacing:0.1px;">N390X-69.893</div><div style="position:absolute;left:3.9px;top:683.99px;font-size:12.5px;line-height:12.5px;letter-spacing:0.1px;">N400X-69.897Y-82.000</div></div>
<div style="left:1251px;top:274px;width:16px;height:688px;background:linear-gradient(90deg,#e6e6e6,#eeeeee 30%,#eeeeee);"></div>
<svg style="left:1251px;top:274px" width="16" height="688" viewBox="0 0 16 688">
<path d="M4 9.5 L7.5 5.5 L11 9.5 Z" fill="#202020"/>
<rect x="0.5" y="18.5" width="14" height="5" rx="1.5" fill="#f4f4f4" stroke="#8a8a8a"/>
<rect x="8" y="19.5" width="6" height="3" fill="#d8d8d8"/>
<path d="M4 678.5 L7.5 682.5 L11 678.5 Z" fill="#202020"/>
</svg>
<div style="left:0px;top:973px;width:904px;height:1px;background:#fff;"></div>
<div style="left:903px;top:262px;width:1px;height:712px;background:#fff;"></div>
<div style="left:1.02px;top:979.54px;font-size:12px;line-height:12px;color:#000;letter-spacing:-0.170px;">Ready</div>
<div style="left:1022px;top:977px;width:85px;height:17px;border-top:1px solid #a0a0a0;border-left:1px solid #a0a0a0;box-sizing:border-box;"></div>
<div style="left:1110px;top:977px;width:71px;height:17px;border-top:1px solid #a0a0a0;border-left:1px solid #a0a0a0;box-sizing:border-box;"></div>
<div style="left:1184px;top:977px;width:27px;height:17px;border-top:1px solid #a0a0a0;border-left:1px solid #a0a0a0;box-sizing:border-box;"></div>
<div style="left:1214px;top:977px;width:30px;height:17px;border-top:1px solid #a0a0a0;border-left:1px solid #a0a0a0;box-sizing:border-box;"></div>
<div style="left:1247px;top:977px;width:34px;height:17px;border-top:1px solid #a0a0a0;border-left:1px solid #a0a0a0;box-sizing:border-box;"></div>
<div style="left:1026.90px;top:979.84px;font-size:12px;line-height:12px;color:#000;letter-spacing:-0.200px;">2012-12-11</div>
<div style="left:1114.59px;top:979.84px;font-size:12px;line-height:12px;color:#000;letter-spacing:0.390px;">19:39:03</div>
<div style="left:1214.52px;top:979.84px;font-size:12px;line-height:12px;color:#000;letter-spacing:-0.180px;">NUM</div>
<div style="left:0px;top:993px;width:1280px;height:1px;background:#fff;"></div>
<div style="left:0px;top:994px;width:1280px;height:30px;background:linear-gradient(#4a4a4a 0px,#4a4a4a 1px,#b5b8b8 1px,#8c8e8e 2.5px,#858787 5px,#4e5050 14px,#1c1d1f 14.8px,#1a1b1d 30px);"></div>
<svg style="left:0;top:994px" width="60" height="30" viewBox="0 994 60 30">
<defs>
<radialGradient id="orb" cx="50%" cy="85%" r="70%"><stop offset="0" stop-color="#35b6ff"/><stop offset="0.45" stop-color="#0b5fa8"/><stop offset="1" stop-color="#0a2a50"/></radialGradient>
<linearGradient id="gl" x1="0" y1="0" x2="0" y2="1"><stop offset="0" stop-color="#e8f0f8" stop-opacity=".9"/><stop offset="1" stop-color="#8fb0cc" stop-opacity=".25"/></linearGradient>
<linearGradient id="fr" x1="0" y1="0" x2="1" y2="1"><stop offset="0" stop-color="#e8401a"/><stop offset="1" stop-color="#ffb020"/></linearGradient>
<linearGradient id="fg" x1="0" y1="0" x2="1" y2="1"><stop offset="0" stop-color="#c8e880"/><stop offset="1" stop-color="#40a020"/></linearGradient>
<linearGradient id="fb" x1="0" y1="0" x2="1" y2="1"><stop offset="0" stop-color="#a8e0ff"/><stop offset="1" stop-color="#1a80d0"/></linearGradient>
<linearGradient id="fy" x1="0" y1="0" x2="1" y2="1"><stop offset="0" stop-color="#fff080"/><stop offset="1" stop-color="#ffa000"/></linearGradient>
</defs>
<circle cx="30" cy="1012.5" r="18.3" fill="#06101c"/>
<circle cx="30" cy="1012.5" r="17" fill="url(#orb)"/>
<ellipse cx="30" cy="1004" rx="14.5" ry="9" fill="url(#gl)" opacity=".75"/>
<path d="M22.5 1005 Q26 1003.5 30.5 1005 L29.5 1013 Q25 1011.5 21 1013 Z" fill="url(#fr)"/>
<path d="M31.5 1005.5 Q36 1007 41.5 1005.5 L40 1013.5 Q35.5 1015 30.5 1013.5 Z" fill="url(#fg)"/>
<path d="M20.5 1014.5 Q25 1013 29.2 1014.5 L28 1022 Q23.5 1020.5 18.5 1022 Z" fill="url(#fb)"/>
<path d="M30.2 1015 Q35 1016.5 39.5 1015 L38 1023 Q33 1024.5 28.5 1023 Z" fill="url(#fy)"/>
</svg>
<div style="left:69px;top:996px;width:156px;height:26px;border:1px solid #5a5a5a;border-radius:3px;background:linear-gradient(#3c3c3c,#262626 45%,#0c0c0c 55%,#121212);box-shadow:inset 0 0 0 1px rgba(0,0,0,.6);box-sizing:border-box;"></div>
<svg style="left:76px;top:1000px" width="20" height="18" viewBox="0 0 20 18">
<path d="M2 3 L12 3 L12 1 L16 4.5 L12 8 L12 6 L2 6 Z" fill="#000" stroke="#c0c0c0" stroke-width=".4"/>
<path d="M8 4 L10 4 L10 9 L8 9 Z" fill="#000"/>
<path d="M2 16 L9 8 L11 8 L4 16 Z" fill="#9070f0"/>
<path d="M7 16 L11 11 L13 12 L10 16 Z" fill="#9070f0"/>
<path d="M11 16 L14 13 L16 16 Z" fill="#9070f0"/>
</svg>
<div style="left:96.52px;top:1004.54px;font-size:12px;line-height:12px;color:#fff;letter-spacing:0.268px;">NcStudio AD. Engra...</div>
<div style="left:1083px;top:1001px;width:13px;height:15.5px;background:#3399ff;"></div>
<div style="left:1082.70px;top:1004.03px;font-size:11px;line-height:11px;color:#fff;letter-spacing:-1.482px;">EN</div>
<svg style="left:1115px;top:998px" width="110" height="22" viewBox="1115 998 110 22">
<rect x="1124" y="1001.5" width="11" height="9" fill="#2b5fb8" stroke="#c8d4e4"/>
<rect x="1120" y="1008" width="9" height="8" rx="1" fill="#8a8a8a" stroke="#d0d0d0" stroke-width=".6"/>
<circle cx="1124.5" cy="1012" r="2" fill="#303030"/>
<circle cx="1132.5" cy="1013.5" r="2" fill="none" stroke="#e0e0e0"/>
<rect x="1140" y="1001" width="6" height="5" fill="#a0a0a0"/>
<rect x="1141" y="1006" width="4" height="10" fill="#7a7a7a"/>
<circle cx="1149.5" cy="1012.5" r="4" fill="#20a020"/>
<path d="M1147.5 1012.5 L1149 1014.5 L1152 1010" stroke="#fff" fill="none" stroke-width="1.1"/>
<text x="1157.5" y="1014.5" font-family="Liberation Sans" font-size="12" fill="#0a0a0a" stroke="#2a2a2a" stroke-width=".3">20</text>
<rect x="1178" y="1001.5" width="10" height="8" fill="#222" stroke="#e0e0e0"/>
<rect x="1175" y="1005.5" width="10" height="8" fill="#222" stroke="#e0e0e0"/>
<path d="M1181 1011 L1188 1017 M1188 1011 L1181 1017" stroke="#ff1010" stroke-width="1.8"/>
<rect x="1192" y="1001" width="16" height="16" fill="#f4f4f4"/>
<circle cx="1197" cy="1006" r="3.3" fill="#e8b830" stroke="#a07010" stroke-width=".6"/>
<path d="M1199 1008 L1205.5 1014.5 L1204 1016 L1202 1014 L1201 1015 L1199.5 1013.5 L1200.5 1012.5 L1197.5 1009.5 Z" fill="#e8b830" stroke="#a07010" stroke-width=".6"/>
<path d="M1213 1006.5 L1216 1006.5 L1220.5 1002 L1220.5 1016.5 L1216 1012.5 L1213 1012.5 Z" fill="#a0a8b0"/>
</svg>
<div style="left:1233.49px;top:1004.54px;font-size:12px;line-height:12px;color:#fff;letter-spacing:0.663px;">19:39</div>
</body></html>
